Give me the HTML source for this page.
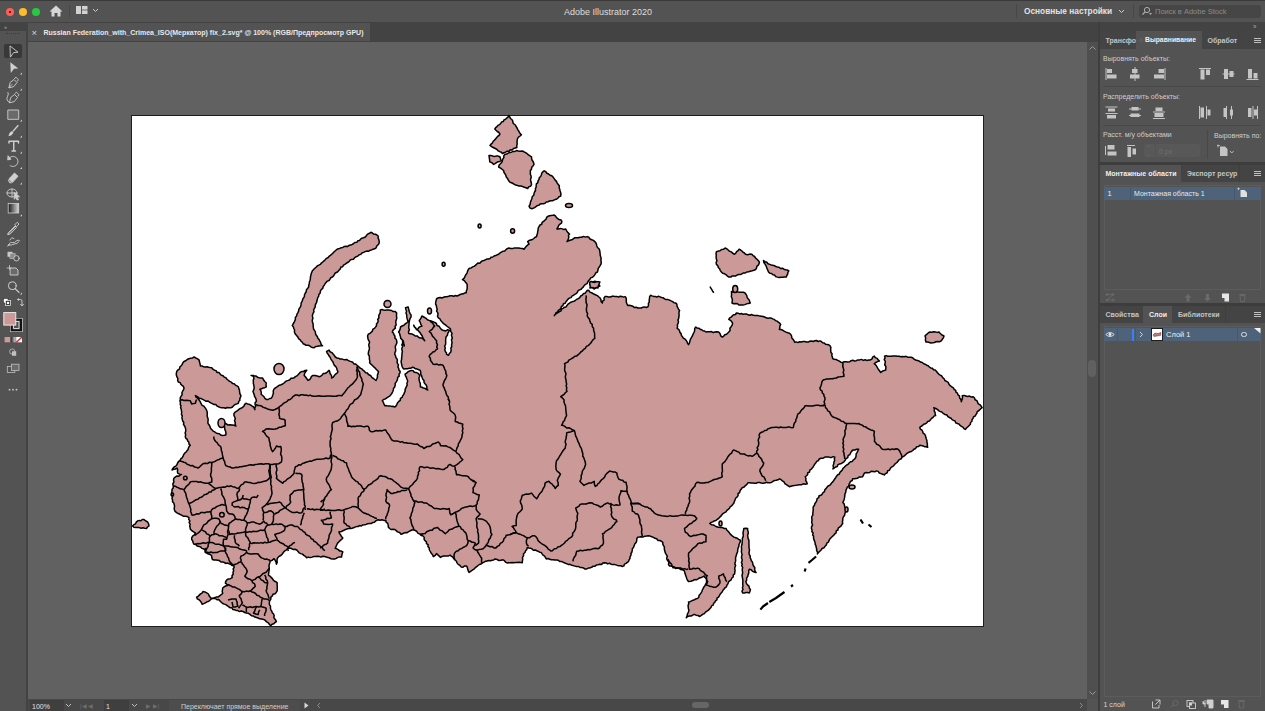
<!DOCTYPE html>
<html><head><meta charset="utf-8">
<style>
*{margin:0;padding:0;box-sizing:border-box}
html,body{width:1265px;height:711px;overflow:hidden;background:#535353;font-family:"Liberation Sans",sans-serif;color:#e6e6e6}
.a{position:absolute}
.t{position:absolute;white-space:nowrap;line-height:1}
</style></head><body>
<!-- title bar -->
<div class="a" style="left:0;top:0;width:1265px;height:22px;background:#535353"></div>
<div class="a" style="left:0;top:0;width:1265px;height:1px;background:#3a3a3a"></div>
<div class="a" style="left:6px;top:8px;width:8px;height:8px;border-radius:50%;background:#fc5f57"></div>
<div class="a" style="left:9px;top:11px;width:2px;height:2px;border-radius:50%;background:#4d0000"></div>
<div class="a" style="left:19px;top:8px;width:8px;height:8px;border-radius:50%;background:#fdbc2e"></div>
<div class="a" style="left:32px;top:8px;width:8px;height:8px;border-radius:50%;background:#28c840"></div>
<svg class="a" style="left:49px;top:5px" width="14" height="12" viewBox="0 0 14 12"><path d="M7 0.5 L13.5 6.5 L11.5 6.5 L11.5 11.5 L8.5 11.5 L8.5 8 L5.5 8 L5.5 11.5 L2.5 11.5 L2.5 6.5 L0.5 6.5 Z" fill="#d6d6d6"/></svg>
<div class="a" style="left:69px;top:5px;width:1px;height:12px;background:#474747"></div>
<svg class="a" style="left:76px;top:6px" width="12" height="9" viewBox="0 0 12 9"><rect x="0" y="0" width="5" height="8" fill="#d2d2d2"/><rect x="6" y="0" width="5.5" height="3.6" fill="#d2d2d2"/><rect x="6" y="4.4" width="5.5" height="3.6" fill="#d2d2d2"/></svg>
<svg class="a" style="left:92px;top:8px" width="7" height="5" viewBox="0 0 7 5"><path d="M1 1 L3.5 3.5 L6 1" stroke="#c8c8c8" stroke-width="1" fill="none"/></svg>
<div class="t" style="left:564px;top:7.5px;font-size:9px;color:#dedede">Adobe Illustrator 2020</div>
<div class="a" style="left:1016px;top:4px;width:1px;height:14px;background:#474747"></div>
<div class="t" style="left:1024px;top:6.5px;font-size:8.3px;font-weight:bold;color:#e2e2e2">Основные настройки</div>
<svg class="a" style="left:1118px;top:9px" width="7" height="5" viewBox="0 0 7 5"><path d="M1 1 L3.5 3.5 L6 1" stroke="#d0d0d0" stroke-width="1" fill="none"/></svg>
<div class="a" style="left:1133px;top:4px;width:1px;height:14px;background:#474747"></div>
<div class="a" style="left:1139px;top:4.5px;width:122px;height:13px;background:#464646;border-radius:3px"></div>
<svg class="a" style="left:1141px;top:6px" width="12" height="10" viewBox="0 0 12 10"><circle cx="6" cy="4" r="2.6" stroke="#b0b0b0" stroke-width="1" fill="none"/><path d="M4.2 5.8 L1.5 8.5" stroke="#b0b0b0" stroke-width="1.2"/><path d="M8 7 L11 7 L9.5 9 Z" fill="#b0b0b0"/></svg>
<div class="t" style="left:1155px;top:7.5px;font-size:7.5px;color:#8a8a8a">Поиск в Adobe Stock</div>

<!-- left toolbar -->
<div class="a" style="left:0;top:22px;width:27px;height:689px;background:#535353"></div>
<div class="a" style="left:0;top:22px;width:27px;height:8.5px;background:#434343"></div>
<div class="t" style="left:4px;top:24px;font-size:6px;color:#aaa;letter-spacing:-1px">››</div>
<div class="a" style="left:6px;top:33px;width:14px;height:1.5px;border-top:1px dotted #3c3c3c"></div>
<div class="a" style="left:26px;top:22px;width:2px;height:689px;background:#434343"></div>
<div class="a" style="left:4px;top:44.2px;width:18px;height:14px;background:#383838;border-radius:2px"></div>
<svg class="a" style="left:0;top:40px" width="27" height="360" viewBox="0 40 27 360">
<g fill="none" stroke="#d0d0d0" stroke-width="0.9" stroke-linejoin="round" stroke-linecap="round">
 <!-- selection -->
 <path d="M10.3 46.2 L18 52.2 L13.6 52.6 L10.6 56.8 Z"/>
 <!-- pen -->
 <path d="M9 87.5 L10.2 82.5 L14 79.5 L17 82.5 L14 86.3 Z M9 87.5 L12 84.5 M14.5 78.5 L16 77.2 L18.3 79.6 L17.6 81"/>
 <!-- curvature -->
 <path d="M9.5 102.5 L10.7 97.5 L14.5 94.5 L17.5 97.5 L14.5 101.3 Z M15 93.5 L16.5 92.2 L18.8 94.6 L18.1 96 M9.5 102.5 Q5.5 100 7.5 96.5 Q9 94 8 92.5"/>
 <!-- rectangle -->
 <rect x="8.2" y="110" width="10.5" height="9.3" fill="#6a6a6a"/>
 <!-- type -->
 <path d="M9 143 L9 141.3 L18.5 141.3 L18.5 143 M13.75 141.3 L13.75 151 M12 151 L15.5 151" stroke-width="1.4"/>
 <!-- rotate -->
 <path d="M10.3 157.2 A5 5 0 1 1 10 165.5" stroke-dasharray="1.2 0.6"/>
 <path d="M8.3 156 L10.8 159.3 L8 159.8 Z" fill="#d0d0d0"/>
 <!-- eraser -->
 <path d="M8.5 179.5 L14.5 173 L18 176.3 L12 182.8 L10 182.8 Z" fill="#d0d0d0"/>
 <path d="M8.5 179.5 L11.2 182 L12 182.8" stroke="#535353" stroke-width="0.6"/>
 <!-- shape builder -->
 <ellipse cx="12" cy="193" rx="5" ry="4"/><path d="M7 193 L17 193 M12 189 L12 197"/>
 <path d="M14.5 192.5 L19.5 196.8 L17 197 L18.5 199.6 L17.2 200 L15.6 197.5 L14.5 199 Z" fill="#d0d0d0"/>
 <!-- eyedropper -->
 <path d="M8.5 234 L15.5 226.5 M8 234.5 L10 234.2 L16.5 227.5 L15 226 L8.5 232.5 Z M15 224.5 L17.2 222.3 L19 224 L16.8 226.3 Z" fill="none"/>
 <!-- blend -->
 <path d="M8.5 244.5 Q11 241.5 12.5 242.5 Q14 243.5 17 240.5 Q19 239.5 19.5 241 Q17 244.5 14 244 Q11 246 9 244.8 M10 240 Q11.5 236.5 14 238.5 M9.5 245 L7.5 246"/>
 <!-- symbol sprayer -->
 <rect x="7.5" y="251.8" width="5" height="5" fill="#c8c8c8" stroke="none"/><rect x="10.2" y="253.5" width="5" height="5" fill="#8a8a8a" stroke="#c8c8c8" stroke-width="0.6"/><circle cx="16.5" cy="258.3" r="2.7" fill="#535353"/>
 <!-- artboard -->
 <path d="M10.5 268 L16 268 L18 270 L18 275 L10.5 275 Z" fill="#6a6a6a"/><path d="M9.5 265.5 L9.5 269.5 M7 268 L11 268" stroke-width="0.8"/>
 <!-- zoom -->
 <circle cx="12.3" cy="285.7" r="3.9" stroke-width="1"/><path d="M15.1 288.6 L19 292.4" stroke-width="1.3"/>
</g>
<g fill="#d0d0d0">
 <path d="M10.3 62.2 L18.3 68.4 L14 68.8 L10.8 73 Z"/>
 <!-- corner tri markers -->
 <path d="M22 72.6 L22 74.6 L20 74.6 Z"/><path d="M22 88.6 L22 90.6 L20 90.6 Z"/><path d="M22 119.6 L22 121.6 L20 121.6 Z"/><path d="M22 135.6 L22 137.6 L20 137.6 Z"/><path d="M22 151.6 L22 153.6 L20 153.6 Z"/><path d="M22 167 L22 169 L20 169 Z"/><path d="M22 182.6 L22 184.6 L20 184.6 Z"/><path d="M22 214.3 L22 216.3 L20 216.3 Z"/><path d="M22 292.6 L22 294.6 L20 294.6 Z"/>
 <!-- brush -->
 <path d="M17.8 124.8 L18.8 125.8 L13.5 131.8 L12.5 130.8 Z"/><path d="M12.2 131 L13.4 132.2 Q12.5 135.5 8.5 136.2 Q9.2 132 12.2 131 Z"/>
</g>
<!-- gradient -->
<defs><linearGradient id="gr" x1="0" x2="1" y1="0" y2="0"><stop offset="0" stop-color="#1a1a1a"/><stop offset="1" stop-color="#d8d8d8"/></linearGradient></defs>
<rect x="8.2" y="203.5" width="10.5" height="9.5" fill="url(#gr)" stroke="#cfcfcf" stroke-width="0.8"/>
<!-- default colors / swap -->
<rect x="3.5" y="298.5" width="4.5" height="4.5" fill="#fff" stroke="#222" stroke-width="0.5"/><rect x="5.5" y="300.5" width="5" height="5" fill="#222" stroke="#fff" stroke-width="0.7"/><rect x="6.8" y="301.8" width="2.4" height="2.4" fill="#fff"/>
<path d="M17.5 299.5 L20.5 299.5 Q22 299.5 22 301 L22 305.5 M20.3 304 L22 306 L23.7 304" stroke="#d0d0d0" stroke-width="0.9" fill="none"/><path d="M17 299.5 L19 298 L19 301 Z" fill="#d0d0d0"/>
<!-- stroke swatch -->
<rect x="10.5" y="318.5" width="11.6" height="13" fill="none" stroke="#f2f2f2" stroke-width="0.9"/>
<rect x="11.6" y="319.6" width="9.4" height="10.8" fill="none" stroke="#111" stroke-width="2"/>
<rect x="13.6" y="321.6" width="5.4" height="6.8" fill="none" stroke="#f2f2f2" stroke-width="0.8"/>
<!-- fill swatch -->
<rect x="3.8" y="312.6" width="12" height="12.5" fill="#cc9999" stroke="#f2f2f2" stroke-width="0.9"/>
<!-- color / gradient / none -->
<rect x="4.6" y="337" width="6" height="5.3" fill="#cc9999"/>
<rect x="10.6" y="337" width="5" height="5.3" fill="url(#gr)"/>
<rect x="16.2" y="337" width="5.8" height="5.3" fill="#fff"/><path d="M16.3 342.2 L22 337" stroke="#e8141b" stroke-width="1.2"/>
<!-- draw mode -->
<circle cx="12.2" cy="351.5" r="2.6" fill="none" stroke="#c0c0c0" stroke-width="0.8"/><rect x="12" y="351.3" width="4.2" height="4.5" fill="#c0c0c0"/>
<!-- screen mode -->
<rect x="7.3" y="366.5" width="7.5" height="6" fill="none" stroke="#c0c0c0" stroke-width="0.8"/><rect x="11.5" y="364.2" width="7.5" height="6.3" fill="#6a6a6a" stroke="#c0c0c0" stroke-width="0.8"/>
<!-- more -->
<circle cx="9.5" cy="389.7" r="0.9" fill="#c8c8c8"/><circle cx="13" cy="389.7" r="0.9" fill="#c8c8c8"/><circle cx="16.5" cy="389.7" r="0.9" fill="#c8c8c8"/>
</svg>


<!-- document tab bar -->
<div class="a" style="left:28px;top:22px;width:1072px;height:20px;background:#434343"></div>
<div class="a" style="left:28px;top:23px;width:342px;height:18px;background:#535353"></div>
<div class="t" style="left:31.5px;top:27.5px;font-size:9.5px;color:#d8d8d8">×</div>
<div class="t" style="left:43.5px;top:29px;font-size:7px;font-weight:bold;color:#e8e8e8">Russian Federation_with_Crimea_ISO(Меркатор) fix_2.svg* @ 100% (RGB/Предпросмотр GPU)</div>

<!-- canvas -->
<div class="a" style="left:28px;top:42px;width:1059px;height:657px;background:#616161"></div>
<div class="a" style="left:131px;top:115px;width:853px;height:512px;background:#fff;border:1px solid #1e1e1e"></div>
<svg width="1265" height="711" viewBox="0 0 1265 711" style="position:absolute;left:0;top:0">
<g fill="#cc9999" stroke="#000" stroke-width="1.5" stroke-linejoin="round">
<polygon points="182.7,421.0 182.3,419.3 181.9,417.6 182.3,415.9 181.4,414.3 181.7,412.5 181.5,410.8 181.2,409.2 180.6,407.6 181.0,405.9 180.2,404.3 180.5,402.7 179.9,401.1 180.2,399.4 180.3,397.6 181.2,396.1 182.2,394.6 181.9,392.7 182.6,391.2 183.6,389.7 184.0,388.0 183.4,386.4 182.0,385.4 180.8,384.3 180.2,382.6 178.3,382.0 177.7,380.4 177.8,378.4 176.8,376.6 176.3,374.8 176.4,372.8 177.0,371.1 178.1,369.8 179.6,368.8 179.9,366.9 181.2,365.8 182.2,364.4 182.9,362.8 184.0,361.5 185.7,360.8 187.2,359.5 188.8,358.8 190.6,358.2 192.5,357.9 194.1,357.0 195.8,358.0 197.6,358.9 199.2,360.2 199.5,362.1 200.1,364.0 200.4,365.9 202.1,365.9 203.6,366.8 205.2,366.9 207.0,366.7 208.5,367.3 210.2,367.6 211.8,367.8 212.9,369.2 214.4,370.1 216.1,370.7 217.0,372.4 219.0,372.6 220.1,373.9 221.3,375.3 223.1,375.8 224.2,377.1 225.9,377.7 227.0,379.2 228.3,380.3 229.7,381.4 231.2,382.1 232.5,383.4 234.2,383.8 235.4,385.1 236.9,385.9 238.4,386.8 238.8,388.6 239.5,390.3 239.6,392.2 240.0,394.0 241.0,395.6 240.5,397.1 239.8,398.6 239.9,400.3 238.7,401.6 238.4,403.2 236.8,403.9 235.1,404.5 233.6,405.6 232.5,407.0 230.8,407.7 229.0,407.8 227.3,407.5 225.5,408.3 223.8,407.7 222.0,407.7 220.2,407.4 218.6,406.7 217.0,406.0 215.8,404.6 213.9,404.5 212.4,403.7 210.8,402.8 209.3,402.0 207.8,400.9 205.8,401.2 204.2,400.2 202.6,399.4 201.0,398.4 199.2,398.2 197.5,396.6 195.4,395.6 196.1,397.1 197.6,398.0 198.5,399.4 199.5,400.6 200.4,402.0 201.1,403.7 202.1,405.3 203.9,406.2 205.0,407.6 206.0,409.1 206.8,410.8 207.3,412.6 207.2,414.4 207.2,416.3 207.8,418.0 208.2,419.8 207.9,421.7 208.0,423.5 209.2,424.9 210.0,426.6 210.6,428.4 211.9,429.7 213.1,431.1 214.6,431.9 216.1,432.8 217.6,433.6 219.4,433.7 220.7,435.0 222.4,435.5 224.1,435.3 225.8,435.0 226.0,433.1 225.6,431.3 224.9,429.6 224.6,427.8 224.5,426.0 222.9,425.1 222.1,423.4 220.3,422.6 219.4,421.0 221.3,421.3 223.0,422.3 224.7,423.0 226.4,424.0 228.0,425.0 230.0,424.7 232.0,424.9 234.0,425.3 235.9,426.0 235.2,424.3 235.2,422.4 234.5,420.7 235.3,418.7 234.7,417.0 233.9,415.3 234.0,413.4 235.2,412.1 236.7,411.2 238.1,410.2 239.3,409.0 241.0,408.3 242.5,407.3 243.9,406.2 244.7,404.4 246.0,403.2 247.5,403.9 249.3,404.3 250.8,405.1 252.2,406.1 253.6,407.0 254.9,409.6 254.8,407.9 255.7,406.2 255.1,404.5 255.1,402.7 256.4,401.2 256.1,399.4 255.5,397.8 254.5,396.4 254.3,394.7 253.6,393.1 253.0,391.5 253.6,389.9 254.2,388.3 254.0,386.7 253.8,385.1 253.3,383.4 253.4,381.8 253.2,380.2 253.9,378.6 253.6,377.0 253.6,375.4 251.1,375.4 252.7,376.1 254.4,375.9 256.1,376.1 257.5,377.2 259.1,377.8 260.8,378.0 262.5,377.9 263.5,379.8 264.7,381.5 266.3,383.0 266.0,384.9 266.3,386.8 264.8,387.7 263.1,388.0 261.6,388.8 259.9,389.3 260.9,390.9 261.3,392.6 261.2,394.4 262.7,395.5 264.0,396.7 264.9,398.3 266.3,399.4 268.1,399.5 269.6,398.5 271.3,398.2 272.3,396.6 272.9,394.8 273.4,393.0 273.2,391.0 273.9,389.3 275.1,388.1 276.6,387.1 278.0,386.1 279.4,385.2 281.1,384.7 282.7,384.0 284.1,383.0 285.3,381.7 286.7,380.9 288.3,380.4 289.8,379.8 290.8,378.3 292.6,378.2 294.2,377.8 295.4,376.6 296.9,375.9 298.1,374.8 299.2,373.6 300.2,372.3 301.7,371.6 303.5,371.5 305.1,370.5 306.8,370.3 305.6,371.8 304.6,373.4 304.2,375.4 305.6,377.0 306.8,378.7 308.0,380.4 309.7,379.5 310.7,378.1 311.5,376.4 313.1,375.4 315.2,375.4 317.1,375.9 319.0,376.7 320.7,376.2 322.1,375.2 323.1,373.6 325.0,373.4 326.5,372.7 327.8,371.5 329.1,370.4 329.8,371.9 330.0,373.5 331.0,374.8 331.7,376.3 331.6,378.0 333.3,377.1 334.3,375.6 335.5,374.2 337.1,373.2 338.0,371.6 337.1,370.0 336.7,368.2 335.8,366.6 334.4,365.4 333.6,363.7 333.0,362.0 331.9,360.6 330.9,359.1 330.3,357.4 329.1,356.1 328.3,354.5 327.1,353.1 326.6,351.4 329.1,350.1 330.1,351.8 331.9,352.6 333.1,354.0 334.3,355.4 335.3,357.0 337.0,358.0 338.6,358.2 340.1,359.1 341.8,359.0 343.3,359.4 344.9,359.7 346.6,359.4 348.1,360.3 349.6,361.1 351.3,361.6 352.8,362.3 353.9,363.9 355.7,364.1 357.0,365.3 358.3,366.3 359.4,367.5 360.8,368.4 362.2,369.2 363.3,370.4 364.6,371.4 365.7,372.7 367.4,373.0 368.4,374.5 369.9,375.2 371.1,376.2 372.0,377.7 373.5,378.5 374.7,379.5 376.0,380.5 376.8,378.8 377.5,377.1 377.4,375.1 378.1,373.4 378.5,371.6 377.2,370.3 376.0,369.1 374.8,367.7 373.4,366.6 372.2,365.3 370.9,364.1 369.6,362.8 369.9,361.1 369.4,359.4 369.4,357.7 369.3,356.0 368.3,354.4 368.4,352.7 368.7,351.0 369.3,349.4 369.4,347.6 368.8,345.8 368.9,344.1 369.6,342.5 369.0,340.8 368.1,339.3 367.8,337.6 367.6,335.8 368.3,334.2 370.0,333.4 371.2,332.2 372.4,331.1 372.9,329.2 374.5,328.4 375.5,327.1 376.5,325.7 376.5,324.0 377.7,322.6 378.2,321.1 377.7,319.3 378.9,317.9 378.7,316.2 379.1,314.6 380.1,313.2 380.3,311.6 380.3,309.9 381.9,309.6 383.5,310.0 385.1,310.2 386.8,310.1 388.4,310.0 390.0,310.2 391.6,310.5 393.2,311.6 395.3,311.6 396.7,313.0 396.5,314.7 396.5,316.4 396.8,318.1 396.3,319.8 395.8,321.4 395.8,323.1 396.2,324.9 395.0,326.5 395.4,328.2 394.1,329.2 392.9,330.4 392.3,332.0 393.5,333.3 394.0,334.8 395.0,336.2 394.9,338.1 396.2,339.3 396.7,340.9 396.9,342.7 396.3,344.3 395.4,345.9 395.3,347.6 395.7,349.4 395.6,351.1 394.9,352.7 394.8,354.4 395.6,355.8 395.8,357.4 396.9,358.8 397.4,360.3 397.0,362.1 397.7,363.6 398.5,365.0 397.9,366.8 398.7,368.3 398.9,369.9 400.1,371.2 400.0,372.9 399.0,374.3 399.2,376.2 397.7,377.3 397.5,379.1 397.0,380.7 396.1,382.1 395.1,383.5 395.2,385.3 394.7,386.9 393.6,388.2 393.3,389.9 392.8,391.5 392.1,393.0 391.1,394.4 390.0,395.9 388.4,396.8 386.8,397.8 385.4,398.9 383.6,399.5 382.3,400.8 383.4,402.4 384.0,404.1 384.8,405.8 386.5,405.6 388.2,406.1 389.9,405.9 391.6,406.4 393.3,406.3 394.9,407.1 396.1,405.8 396.9,404.3 397.6,402.7 398.8,401.4 400.3,400.3 400.4,398.4 402.1,397.4 402.7,395.8 403.8,394.4 404.3,392.8 405.1,391.4 405.1,389.6 405.7,388.1 406.4,386.6 407.2,385.1 406.9,383.3 407.6,381.8 407.5,380.2 406.8,378.7 406.3,377.2 405.5,375.8 405.1,374.2 406.6,373.1 408.0,371.8 409.6,371.0 411.4,370.4 413.2,370.7 414.3,372.2 416.1,372.4 417.7,373.1 419.0,374.2 419.7,375.9 419.0,377.8 419.1,379.6 419.5,381.4 420.2,383.2 420.4,385.0 420.3,386.8 421.9,387.2 423.3,388.0 425.0,388.3 426.3,389.3 427.8,390.0 426.8,388.6 426.9,386.7 426.2,385.1 425.0,383.8 424.0,382.4 424.0,380.5 422.8,379.2 422.1,377.5 421.6,375.7 420.7,374.1 420.7,372.2 420.3,370.4 418.8,369.8 417.3,369.1 415.6,368.8 414.2,367.8 412.7,367.2 411.0,368.2 409.2,368.2 407.5,368.8 405.6,368.8 403.8,369.1 402.7,367.7 402.0,366.2 401.7,364.5 401.3,362.8 401.1,361.2 401.6,359.5 401.6,357.9 401.9,356.3 401.9,354.7 402.1,353.0 402.4,351.4 401.9,349.8 401.9,348.1 402.7,346.5 401.8,344.9 402.6,343.3 402.6,341.6 402.5,340.0 403.6,341.8 403.3,344.1 404.3,346.0 404.1,344.3 403.2,342.8 402.7,341.2 402.1,339.6 400.7,338.4 400.5,336.7 399.9,335.1 399.6,333.4 398.6,332.0 399.6,330.5 400.2,328.8 400.5,327.0 402.1,326.0 403.9,325.2 405.2,323.9 406.8,322.8 408.2,321.5 407.5,319.9 407.0,318.2 406.8,316.4 406.7,314.7 406.0,313.0 406.6,311.1 405.9,309.5 405.5,307.8 408.2,306.9 408.5,308.6 409.0,310.3 409.4,312.0 410.1,313.6 411.1,315.2 411.0,317.0 410.0,318.7 409.5,320.5 409.1,322.4 409.0,324.2 408.9,326.1 408.7,327.9 409.4,329.8 408.5,331.6 408.7,333.4 410.4,333.7 412.2,334.1 413.7,334.9 415.2,336.0 417.1,335.9 418.5,337.1 420.1,338.0 421.9,338.0 423.3,339.3 424.7,340.7 423.7,339.2 422.8,337.5 422.1,335.8 421.0,334.3 420.2,332.8 419.0,331.6 418.0,330.3 416.4,329.4 415.5,328.1 414.5,326.7 413.7,325.2 414.4,326.9 415.8,328.1 416.5,329.7 417.9,328.9 418.9,327.4 420.3,326.6 421.9,326.1 420.8,324.4 420.3,322.3 419.2,320.6 420.3,319.2 421.2,317.6 421.9,316.0 424.6,317.5 426.2,318.4 427.4,319.7 429.2,320.4 431.1,321.0 432.9,321.7 434.7,322.4 436.4,323.5 437.1,325.5 439.1,326.3 440.2,327.9 441.7,329.7 443.9,330.6 445.7,331.0 447.4,329.8 449.2,330.2 448.7,331.9 447.7,333.4 447.5,335.2 446.1,336.8 445.7,338.9 445.6,340.7 445.7,342.6 445.6,344.4 444.6,346.1 445.3,348.0 444.8,349.8 445.3,351.4 446.4,352.7 446.6,354.4 448.4,355.3 449.4,353.5 450.8,351.9 451.2,349.8 450.8,348.1 451.8,346.5 451.5,344.9 452.0,343.3 451.9,341.6 451.4,339.9 452.3,338.3 451.9,336.7 451.4,335.0 452.1,333.4 450.7,331.4 450.5,329.0 448.9,327.7 447.3,326.5 445.7,325.2 444.3,324.2 443.0,323.1 441.9,321.7 440.7,320.5 439.9,318.8 438.4,317.9 437.5,316.3 438.0,314.4 437.7,312.6 436.6,311.1 437.2,309.2 436.6,307.5 436.4,305.7 435.6,304.1 435.7,302.3 436.1,300.5 436.6,298.7 438.5,297.8 440.2,297.5 441.9,298.0 443.6,297.3 445.2,296.8 446.9,296.7 448.6,296.3 450.2,295.8 451.9,295.7 453.7,296.3 455.3,295.5 457.1,296.0 458.7,295.3 460.1,294.5 461.7,294.0 463.3,293.8 464.7,292.9 466.3,292.8 466.3,291.0 467.1,289.3 467.2,287.5 467.2,285.7 467.0,283.9 465.6,282.3 464.3,280.6 462.5,279.5 464.2,278.2 465.0,276.3 465.9,274.7 467.0,273.1 467.6,271.3 468.3,269.5 469.4,268.2 471.2,268.0 472.5,266.9 474.1,266.4 475.4,265.4 476.6,264.2 477.8,263.1 479.8,263.2 480.9,261.9 482.2,260.9 483.8,260.6 485.3,259.8 486.7,259.1 488.4,259.0 490.0,258.6 491.1,257.2 492.8,257.0 494.1,256.0 495.7,255.6 497.1,254.8 498.6,254.3 499.8,253.1 501.3,252.2 502.8,251.3 504.7,251.1 505.9,249.8 507.2,248.6 508.8,248.0 510.7,248.5 512.6,248.6 514.5,247.9 516.4,248.0 518.4,247.9 520.3,248.2 522.2,248.4 524.0,249.2 525.1,247.8 526.2,246.4 527.5,245.2 529.0,244.2 527.7,241.6 529.0,240.5 530.7,240.0 532.4,239.5 533.8,238.5 535.1,237.3 536.6,236.6 536.9,234.9 537.5,233.2 537.7,231.5 538.1,229.8 538.2,228.1 539.1,226.5 540.0,225.0 541.7,224.3 542.1,222.4 543.6,221.4 544.8,220.2 546.1,219.1 546.6,217.4 548.0,216.3 549.5,215.7 551.1,215.4 552.7,215.3 554.3,215.1 555.6,216.1 556.5,217.6 557.8,218.6 559.1,219.6 561.0,219.9 561.9,221.4 561.4,223.2 559.7,224.3 558.5,225.7 557.9,227.5 556.9,229.0 558.7,229.1 560.4,228.4 562.2,228.9 563.9,229.5 565.7,229.0 566.7,230.9 567.9,232.6 569.5,234.0 568.5,235.3 568.8,237.1 568.4,238.7 567.9,240.2 567.0,241.6 568.5,240.9 570.1,240.3 571.8,239.8 573.2,238.8 574.6,237.8 576.4,237.8 578.2,237.8 580.0,237.2 581.8,237.2 583.5,236.4 585.4,237.1 587.2,236.6 588.9,237.3 590.0,239.0 591.7,239.7 593.4,240.4 594.8,241.6 595.9,242.9 596.5,244.4 596.8,246.0 597.5,247.5 598.9,248.7 599.6,250.1 599.9,251.8 600.1,253.5 600.2,255.2 600.7,256.8 601.1,258.5 600.9,260.2 601.2,261.9 601.1,263.8 600.2,265.4 599.3,267.0 598.2,268.4 597.9,270.3 597.4,272.0 595.8,272.9 594.9,274.6 593.8,276.0 592.5,277.3 590.7,277.9 589.8,279.6 588.5,280.6 587.8,282.2 587.0,283.6 585.5,284.4 584.2,285.5 583.4,286.9 582.2,288.0 581.1,289.3 579.5,289.9 578.1,290.7 577.3,292.4 576.2,293.6 574.7,294.4 573.4,295.3 571.9,296.1 571.0,297.6 569.3,298.1 568.1,299.1 567.0,300.4 565.9,301.7 565.2,303.2 563.4,303.8 562.9,305.6 561.4,306.5 560.9,308.2 559.8,309.5 558.3,310.3 557.7,312.0 556.0,312.7 555.4,314.3 554.3,315.6 555.3,314.3 556.6,313.3 558.0,312.5 559.5,311.7 561.0,310.9 561.7,309.1 563.1,308.4 564.2,307.2 566.1,306.9 567.0,305.4 568.1,304.1 569.5,303.1 570.9,302.2 572.5,301.6 574.2,301.2 575.5,300.3 576.8,299.2 578.4,298.6 579.7,297.6 580.7,296.0 582.2,295.3 583.2,293.8 585.1,293.2 586.2,291.8 587.2,290.3 588.9,290.6 589.9,292.1 591.5,292.7 592.9,293.5 594.4,294.3 595.9,295.0 597.4,295.6 598.6,296.7 599.9,297.8 600.9,299.4 601.1,301.4 602.4,302.9 602.6,301.2 604.2,300.0 604.0,298.0 605.0,296.6 606.7,296.4 608.4,297.0 610.0,297.0 611.7,296.5 613.4,296.1 615.1,296.6 616.8,296.4 618.5,297.1 620.2,296.2 621.8,296.4 623.5,297.1 625.2,296.6 626.2,298.2 626.3,300.1 626.3,302.0 626.9,303.7 627.7,305.4 629.5,305.3 631.2,305.7 632.9,306.2 634.4,307.6 636.3,307.3 637.9,308.0 639.6,308.1 641.3,308.0 642.9,307.2 644.6,306.9 646.4,307.5 648.0,306.7 648.5,305.1 648.4,303.4 649.3,301.9 649.2,300.1 649.5,298.5 649.6,296.8 650.5,295.3 652.0,295.9 653.6,296.4 655.2,296.4 656.7,297.1 658.5,296.3 660.1,296.9 661.6,297.5 663.2,297.8 664.6,298.9 666.1,299.6 668.0,299.6 669.6,300.1 671.1,300.9 672.7,301.6 674.0,302.7 675.8,302.9 676.9,304.2 677.0,306.1 677.8,307.6 678.5,309.2 679.6,310.5 679.0,312.1 679.0,313.7 679.1,315.4 678.9,317.0 678.6,318.6 677.9,320.1 678.5,321.8 678.1,323.4 677.3,324.9 677.6,326.6 677.1,328.2 678.5,329.3 679.5,330.6 679.9,332.4 681.1,333.6 681.4,335.4 682.4,336.7 683.3,338.2 684.9,339.0 686.1,340.3 687.0,341.7 687.6,343.3 688.5,344.7 689.4,343.2 689.8,341.5 690.2,339.8 691.1,338.2 692.0,336.7 692.7,335.1 693.4,333.5 694.2,332.0 694.7,330.3 694.7,328.4 695.8,327.0 697.1,328.1 698.8,328.2 700.1,329.2 701.7,329.7 703.0,330.8 704.7,331.0 706.0,332.0 707.8,331.7 709.6,331.7 711.4,331.6 713.2,332.5 715.0,332.1 716.8,331.8 718.6,332.0 720.0,333.6 720.7,335.8 722.4,337.1 723.7,336.1 724.8,334.8 726.5,334.3 727.6,333.2 728.8,332.0 730.1,330.5 729.9,328.3 731.1,326.7 732.2,325.1 732.6,323.2 731.6,321.6 730.4,320.3 728.8,319.4 729.7,317.9 731.2,317.1 732.3,315.9 733.6,314.8 735.5,314.5 736.4,313.0 738.1,313.3 739.7,313.9 741.5,313.5 743.1,314.3 744.8,314.0 746.5,314.0 748.1,314.8 749.8,315.3 751.6,314.5 753.2,315.3 754.9,315.5 756.6,315.6 758.3,315.6 759.9,316.1 761.5,316.2 763.1,316.6 764.7,317.0 766.2,317.8 767.8,318.2 769.5,318.0 771.2,318.1 772.7,318.9 774.3,319.4 775.4,320.6 777.1,321.1 778.3,322.2 779.6,323.1 780.7,324.4 779.9,326.0 779.8,327.8 779.4,329.5 781.3,329.6 782.9,330.3 784.5,331.3 786.1,332.1 787.8,332.8 789.5,333.3 790.8,334.5 791.6,336.1 791.8,337.9 793.0,339.2 794.0,340.6 794.6,342.2 796.3,341.9 798.0,342.6 799.6,341.7 801.4,341.9 803.0,341.6 804.7,341.6 806.4,342.0 808.1,342.1 809.8,341.3 811.4,341.0 813.2,341.5 814.8,340.8 816.5,340.5 818.2,341.5 819.9,340.9 821.4,341.5 822.6,342.7 824.3,342.9 825.5,344.2 827.1,344.4 828.7,344.8 830.0,345.9 830.9,347.4 830.6,349.1 830.8,350.7 830.8,352.3 832.1,353.7 831.8,355.5 832.4,357.0 832.6,358.6 834.3,359.2 836.1,359.5 837.7,360.3 839.3,361.2 840.8,362.2 842.7,362.4 844.3,361.7 846.1,361.8 847.8,361.9 849.5,361.8 851.1,360.7 852.8,360.3 854.6,361.0 856.3,360.7 857.9,359.9 859.7,359.9 861.5,359.4 863.3,360.4 865.1,359.8 866.9,360.4 868.7,360.0 870.5,359.9 872.0,358.9 872.7,357.1 874.3,356.1 875.3,357.6 877.1,358.4 878.2,359.8 879.4,361.1 877.5,361.6 875.8,362.5 874.3,363.7 875.7,364.9 876.7,366.4 877.6,368.0 878.5,369.6 879.7,371.0 880.7,372.5 882.2,371.3 883.9,370.6 885.7,370.0 885.8,368.2 885.9,366.5 884.7,364.8 885.2,363.0 885.3,361.3 884.2,359.6 885.1,357.8 884.5,356.1 886.1,355.6 887.7,356.2 889.3,356.2 891.0,356.3 892.6,355.9 894.2,356.0 895.8,356.1 897.5,356.3 899.2,356.3 900.9,356.7 902.6,356.6 904.3,356.7 906.0,356.3 907.6,357.2 909.3,357.2 911.0,357.3 912.7,357.8 914.0,359.2 915.6,360.0 917.4,360.5 919.1,361.0 920.5,362.1 922.3,362.5 923.7,363.7 925.3,364.2 926.6,365.3 928.2,365.8 929.4,367.0 930.7,367.9 932.4,368.3 933.5,369.8 935.2,370.0 936.4,371.3 937.5,372.8 938.7,374.1 940.2,375.1 941.8,376.0 942.7,377.6 944.1,378.8 944.9,380.5 946.5,381.4 948.2,382.4 949.0,384.3 950.2,385.7 951.8,386.8 953.4,387.9 954.1,389.4 955.7,390.3 955.9,392.2 957.4,393.2 958.0,394.8 959.4,395.8 959.6,397.9 961.0,399.6 961.3,401.7 962.0,399.8 962.5,397.9 962.3,395.8 964.2,395.4 965.9,396.0 967.7,396.6 969.6,396.1 971.3,397.1 973.2,396.8 974.5,398.0 975.1,399.8 976.9,400.6 977.6,402.3 978.4,403.9 980.1,404.8 981.2,406.2 982.1,407.7 980.5,409.0 979.0,410.5 977.2,411.6 976.9,413.3 975.9,414.6 975.2,416.0 973.5,416.9 973.0,418.4 972.0,419.7 971.9,421.5 970.5,422.5 970.4,424.3 969.2,425.5 967.9,426.8 966.5,428.0 965.3,429.4 963.9,428.6 962.9,427.1 961.4,426.4 960.1,425.4 959.0,424.1 957.4,423.5 955.8,422.9 955.1,421.0 953.5,420.4 952.1,419.6 951.0,418.2 949.5,417.5 947.9,416.7 946.9,415.0 945.1,414.5 943.5,413.7 942.2,412.3 940.5,411.6 938.9,410.9 937.6,409.6 935.8,408.4 933.7,407.7 934.6,409.2 934.1,410.9 935.1,412.4 935.1,414.1 935.6,415.6 933.9,416.1 932.9,417.5 931.5,418.4 930.5,419.7 929.4,421.0 927.7,421.5 926.7,422.9 925.3,423.8 923.7,424.3 922.5,425.5 921.1,426.4 919.8,427.4 920.3,429.1 921.9,430.0 922.7,431.5 923.1,433.2 924.6,434.2 925.5,435.6 925.8,437.3 926.3,438.9 926.9,440.5 926.9,442.2 927.4,443.8 927.3,445.6 927.7,447.2 926.1,446.7 924.5,446.7 923.0,445.9 921.4,445.6 919.8,445.2 918.6,446.6 916.6,446.8 915.5,448.5 913.9,449.2 912.7,450.5 911.2,451.6 909.4,452.0 907.8,452.8 906.3,453.9 905.1,455.2 903.7,456.3 902.1,457.1 901.2,458.8 899.3,459.6 898.1,461.0 897.0,462.5 895.4,463.6 894.2,465.0 893.0,466.3 891.4,467.1 890.3,468.5 889.5,470.2 887.7,470.8 887.2,472.8 885.5,473.6 884.3,474.9 882.7,474.2 881.0,473.6 879.3,473.0 878.1,471.4 876.4,470.9 874.8,471.8 873.0,471.4 871.2,471.2 869.7,472.5 868.0,472.7 866.2,472.5 864.5,472.9 863.5,474.8 862.5,476.8 860.8,477.0 859.1,477.1 857.6,478.2 855.9,478.4 854.3,478.7 852.6,478.8 852.2,480.5 850.5,481.4 849.8,482.9 849.0,484.3 848.9,486.2 847.2,487.1 846.7,488.7 845.9,490.3 845.8,492.2 845.0,493.8 844.8,495.6 844.6,497.4 844.2,499.2 843.6,500.9 842.8,502.5 844.1,503.8 844.5,505.6 844.9,507.4 845.7,508.9 846.7,510.4 845.5,511.8 844.9,513.4 844.6,515.3 843.5,516.7 842.8,518.3 842.8,520.0 842.4,521.8 842.7,523.5 841.7,524.8 840.9,526.2 839.5,527.2 838.2,528.2 837.9,530.1 836.3,530.8 836.1,532.8 834.8,533.8 833.9,535.1 832.6,536.2 831.3,537.5 830.0,538.8 829.1,540.4 828.4,542.1 826.8,543.1 826.3,545.0 825.0,546.3 824.0,547.8 822.1,548.5 821.1,550.0 819.8,551.2 818.5,552.5 817.4,553.9 817.6,552.2 816.6,550.7 816.7,549.0 816.2,547.5 816.0,545.8 815.2,544.4 815.1,542.7 814.6,541.1 813.9,539.6 813.5,538.0 813.6,536.3 812.6,534.9 813.2,533.1 811.9,531.7 812.0,530.0 811.4,528.3 811.6,526.7 812.6,525.0 811.9,523.3 811.7,521.7 812.1,520.0 811.7,518.3 811.8,516.7 812.8,515.1 812.8,513.4 813.0,511.8 813.2,510.2 813.1,508.5 813.3,506.7 814.5,505.2 814.9,503.5 816.1,502.0 816.8,500.4 817.1,498.6 818.6,497.7 819.1,495.8 821.0,495.3 822.2,494.1 823.0,492.6 824.5,491.7 824.8,489.8 826.0,488.6 827.0,487.3 828.0,486.0 829.8,485.3 830.9,484.1 831.8,482.7 833.0,481.6 833.9,480.2 834.9,478.8 835.8,477.4 836.7,476.0 837.8,474.7 839.4,474.0 840.0,472.3 841.2,471.1 842.3,470.0 843.0,468.4 844.3,467.3 845.4,466.1 846.7,465.0 848.2,464.2 849.2,462.9 850.5,461.8 852.3,461.4 853.3,460.0 854.6,459.0 855.7,457.5 856.1,455.8 856.1,453.9 857.2,452.4 857.9,450.8 858.6,449.2 856.6,449.2 854.8,450.0 852.8,450.1 851.5,451.4 850.6,453.0 849.8,454.7 848.1,455.7 847.8,457.7 846.0,458.6 845.2,460.3 844.1,461.6 842.8,462.7 841.3,463.5 839.6,463.9 838.0,464.6 837.3,466.5 835.6,467.0 834.3,468.0 832.9,468.9 833.5,467.3 833.1,465.5 833.8,463.8 833.9,462.1 834.7,460.5 834.3,458.7 834.9,457.1 833.2,456.6 831.6,457.4 830.0,457.4 828.3,456.9 826.6,457.1 825.0,457.1 823.2,458.2 821.0,458.2 819.1,459.0 818.5,460.6 816.8,461.3 815.9,462.7 814.9,463.9 814.0,465.3 813.3,466.7 812.2,468.0 811.3,469.2 809.8,470.2 809.6,472.0 807.8,472.7 807.6,474.6 806.5,475.7 805.2,476.8 806.0,478.5 805.7,480.4 806.7,482.1 807.2,483.8 805.2,484.2 803.2,483.8 801.3,484.8 799.3,484.7 797.7,485.1 796.0,485.3 794.3,485.4 792.6,485.7 791.0,486.2 789.4,486.7 787.9,485.7 786.4,484.6 784.9,483.6 784.0,481.9 782.4,480.9 781.1,479.7 779.5,478.8 778.0,479.8 776.2,480.2 774.4,480.5 772.9,481.4 771.4,482.5 769.6,482.8 767.9,482.8 766.3,482.3 764.6,483.1 762.9,483.2 761.3,483.0 759.6,482.6 757.9,482.4 756.2,483.2 754.6,483.2 752.9,483.1 751.2,483.0 749.6,482.8 747.9,482.8 746.9,484.4 745.4,485.6 744.2,487.0 742.2,487.7 741.1,489.2 740.0,490.7 739.7,492.5 738.0,493.6 738.1,495.6 737.0,497.1 735.6,498.3 735.0,500.0 734.3,501.6 733.8,503.3 732.7,504.5 731.7,505.9 730.2,506.7 729.5,508.3 728.2,509.4 726.9,510.4 726.0,511.9 724.5,512.7 723.0,513.6 721.9,514.8 720.9,516.2 719.7,517.2 718.6,518.5 717.2,519.4 715.9,520.5 714.1,520.9 712.8,521.9 711.1,522.4 709.8,523.5 711.4,524.7 713.4,524.9 715.0,525.9 716.7,526.8 718.6,527.3 720.5,527.5 722.5,527.6 724.3,528.5 726.2,528.6 726.9,530.2 728.1,531.3 729.2,532.6 730.1,533.9 731.4,535.1 732.6,536.2 734.0,537.1 735.7,537.7 737.3,538.3 738.6,539.4 740.2,540.0 740.3,541.7 739.6,543.2 738.9,544.7 738.9,546.3 738.1,548.0 737.7,549.8 737.6,551.7 736.9,553.4 736.4,555.1 735.8,556.9 735.5,558.6 735.7,560.3 735.3,562.0 734.8,563.6 735.6,565.4 735.0,567.0 734.7,568.7 735.1,570.4 734.8,572.1 734.7,573.8 733.3,574.9 733.2,577.0 731.7,578.1 731.2,579.8 729.6,580.8 728.4,582.2 727.9,583.9 726.9,585.2 726.4,586.8 725.0,587.8 724.1,589.1 723.0,590.3 722.3,591.8 721.2,593.0 720.1,594.2 719.4,595.7 718.6,597.1 717.1,598.0 716.9,599.8 715.5,600.8 714.9,602.3 713.6,603.4 713.2,605.1 711.5,605.9 711.0,607.5 709.7,608.8 708.5,610.2 707.0,611.1 705.5,612.1 704.4,613.6 702.7,614.3 701.3,615.4 699.8,616.5 698.0,615.5 696.0,615.2 694.2,614.3 692.7,615.2 691.2,616.0 689.3,616.1 687.7,616.5 686.3,617.7 687.1,615.8 687.5,613.8 688.5,612.0 688.9,610.3 688.4,608.6 688.2,607.0 688.1,605.3 688.8,603.6 688.5,601.9 690.1,601.7 691.6,600.9 693.0,600.2 694.5,599.7 695.9,598.8 697.5,598.5 698.8,597.3 699.0,595.5 700.1,594.3 701.1,592.9 701.9,591.5 702.4,589.8 703.2,588.4 703.9,586.9 705.0,585.7 705.5,584.1 707.1,583.2 707.7,581.6 706.7,580.3 706.4,578.6 704.9,577.5 704.3,576.0 702.7,576.8 701.2,577.6 699.5,578.0 698.0,578.9 696.4,579.8 694.5,579.6 693.0,580.5 690.8,581.3 688.5,581.6 687.5,580.2 686.8,578.7 686.3,577.1 685.7,575.4 685.1,573.8 684.7,572.0 684.0,570.4 682.4,569.7 680.7,569.6 679.3,568.4 677.6,568.0 675.7,568.4 674.4,567.0 672.8,566.4 671.1,566.1 669.4,565.9 668.5,564.5 668.9,562.7 668.2,561.2 667.1,559.8 666.6,558.2 667.3,556.4 666.5,554.9 665.6,553.4 665.0,551.9 664.6,550.3 664.3,548.8 664.4,547.0 663.5,545.6 662.8,544.1 662.8,542.4 661.4,541.2 659.8,540.5 657.9,540.4 656.7,538.8 654.9,538.3 653.4,537.4 651.8,536.7 650.1,536.1 648.3,535.8 646.5,536.1 644.7,536.2 642.9,537.1 641.1,536.7 639.3,537.1 637.5,537.3 636.8,538.9 636.7,540.7 636.2,542.4 634.9,543.7 634.2,545.5 633.6,547.3 632.4,548.7 632.2,550.4 631.9,552.0 631.0,553.5 631.0,555.2 630.1,556.6 630.0,558.3 629.1,559.8 628.6,561.4 627.3,562.4 626.1,563.4 624.5,564.1 623.9,565.9 622.3,566.5 620.8,565.8 619.1,565.8 617.5,565.4 615.9,564.9 614.3,564.4 612.6,564.6 611.0,564.2 609.5,563.2 607.7,563.9 606.2,562.9 604.6,562.7 602.9,563.1 601.6,564.4 599.7,564.3 598.1,564.8 596.3,565.1 595.0,566.3 593.1,566.2 591.7,567.3 590.0,567.9 588.3,568.0 586.8,569.0 585.0,569.1 583.5,567.9 581.8,567.6 580.0,567.5 578.5,566.5 576.6,566.6 575.0,566.1 573.3,565.6 571.6,565.2 570.0,564.3 568.1,564.4 566.5,563.6 564.9,563.0 563.2,562.3 561.7,561.4 559.8,561.5 558.3,560.3 556.5,560.1 554.8,560.0 553.1,559.7 551.4,559.8 549.7,559.3 548.1,558.5 546.3,558.9 545.4,557.5 544.6,556.1 543.1,555.2 542.1,553.9 541.3,552.5 539.7,552.2 538.2,551.3 536.7,550.7 535.2,550.0 533.3,550.2 532.1,548.9 530.6,548.2 528.9,548.0 527.3,547.5 526.8,549.4 525.6,550.8 525.0,552.5 523.5,553.8 523.6,555.6 522.5,557.3 522.7,559.1 522.4,560.9 522.3,562.7 520.6,562.4 518.9,562.3 517.2,562.6 515.5,562.6 513.8,562.7 512.1,562.6 510.4,562.7 508.7,562.7 507.0,562.9 505.5,562.1 504.5,560.7 503.0,559.8 501.0,560.2 499.0,560.6 497.2,559.5 495.1,559.0 493.6,559.9 492.0,560.2 490.5,560.7 488.8,560.6 487.1,560.9 485.5,561.3 484.0,562.1 482.5,562.9 481.1,564.0 479.4,564.5 478.0,565.5 476.7,566.7 475.3,567.7 473.9,569.1 472.3,570.2 470.6,571.3 469.0,572.4 468.2,570.9 467.7,569.3 467.4,567.6 466.6,566.1 464.7,565.9 463.0,567.2 461.1,566.9 459.9,565.4 458.2,564.4 457.0,562.9 456.3,561.0 454.8,559.8 453.7,558.5 452.8,557.0 451.2,556.2 450.0,555.0 448.6,556.0 446.9,555.9 445.3,556.1 443.6,556.1 442.0,556.4 440.6,557.4 439.2,556.1 437.9,554.9 436.6,553.5 435.3,555.4 433.4,556.6 432.8,555.1 431.6,553.8 430.8,552.4 430.0,551.0 429.2,549.5 429.2,547.7 427.9,546.6 428.1,544.6 426.4,543.6 426.5,541.8 425.0,540.7 424.1,539.3 424.2,537.4 423.2,536.1 421.5,535.6 420.0,534.5 422.5,535.5 421.2,534.3 419.4,533.9 417.8,533.1 416.8,531.4 415.3,530.5 413.7,529.8 411.9,530.0 410.2,530.8 408.6,531.7 407.2,532.7 405.5,532.6 404.0,533.0 402.5,533.7 401.0,534.2 399.6,532.5 397.5,531.9 396.0,530.4 394.6,529.4 392.9,529.2 391.0,529.5 389.6,528.5 388.3,527.1 388.2,525.1 387.7,523.4 386.1,522.2 385.8,520.3 383.9,520.4 382.0,519.7 380.1,520.2 378.2,519.7 376.1,520.6 374.4,522.2 372.7,522.6 371.2,523.5 369.4,523.6 367.6,523.8 366.0,524.4 364.3,524.7 362.7,524.9 361.3,526.0 359.6,525.6 358.2,526.5 356.5,526.6 355.0,527.1 353.5,527.8 352.0,528.2 350.4,528.5 348.7,528.6 347.0,528.9 345.4,529.5 343.9,530.3 342.3,531.0 340.8,531.8 339.0,531.7 339.5,533.6 340.7,535.0 341.5,536.6 342.8,538.0 341.7,539.4 340.2,540.4 339.0,541.8 337.6,543.1 336.8,544.8 336.0,546.5 335.2,548.2 336.8,548.8 338.3,549.6 339.6,550.9 341.3,551.1 342.8,552.0 342.2,553.6 341.8,555.3 341.5,557.0 339.6,556.9 337.9,557.4 336.3,558.4 334.6,559.1 332.7,558.9 331.0,558.7 329.5,558.0 327.9,557.4 326.3,557.0 324.6,556.5 322.8,556.2 320.9,557.1 319.2,556.4 317.4,556.2 315.6,556.4 313.8,556.5 312.0,557.1 310.2,557.6 308.4,557.1 306.6,557.7 305.4,556.3 303.8,555.4 302.5,554.1 300.7,553.6 299.1,552.8 297.9,551.3 296.7,550.0 295.0,549.2 293.1,549.4 291.3,548.5 289.4,548.1 287.5,548.4 286.6,549.8 285.1,550.6 283.9,551.7 283.0,553.0 282.0,554.4 280.8,555.5 279.3,556.2 278.1,557.3 277.2,558.7 277.0,560.5 277.2,562.4 276.4,564.2 276.0,562.2 275.2,560.4 274.1,558.7 272.3,560.2 270.1,561.1 269.8,562.9 269.2,564.6 269.0,566.4 269.3,568.2 269.1,570.0 268.9,571.8 268.6,573.5 268.5,575.3 270.0,576.2 271.2,577.4 272.4,578.6 273.3,580.1 274.5,581.2 276.0,581.8 277.2,582.9 277.1,584.9 277.3,586.8 277.2,588.8 277.2,590.8 276.2,592.4 275.1,593.7 273.0,594.2 272.3,595.9 270.9,597.1 270.8,599.1 269.7,600.8 269.3,602.7 269.4,604.6 270.5,606.2 270.4,608.1 270.9,609.8 271.8,611.2 272.3,612.8 273.5,614.0 274.2,615.5 273.8,617.4 274.6,618.8 275.7,620.1 276.4,621.6 275.0,622.5 273.8,623.8 272.1,624.3 270.9,625.6 269.5,624.6 268.6,623.1 267.1,622.2 265.9,621.1 264.7,619.9 263.0,619.3 261.3,619.0 259.7,618.8 258.1,618.0 256.5,617.5 254.9,617.1 253.5,616.1 251.5,615.8 250.0,614.4 248.4,613.3 246.4,612.9 244.7,612.5 243.1,611.5 241.4,611.1 239.5,611.6 237.9,610.6 236.2,610.4 234.5,609.8 232.8,609.4 231.8,607.7 229.9,607.7 228.6,606.6 227.2,605.7 225.9,604.6 224.3,604.1 222.7,603.5 221.3,602.3 220.0,600.9 218.7,599.5 216.9,599.7 215.2,598.5 213.4,598.3 211.6,598.7 210.2,600.0 208.8,601.3 206.9,601.9 205.4,602.9 203.8,603.6 202.1,604.2 201.4,602.5 200.3,601.1 199.1,599.7 197.3,598.9 196.6,597.1 198.1,596.3 199.3,595.1 200.5,593.9 202.0,593.1 202.9,591.6 204.9,591.9 206.7,592.8 208.4,594.0 209.3,596.1 210.8,597.9 212.6,598.2 214.4,597.7 216.1,597.1 217.9,597.1 219.6,595.9 221.3,594.7 222.7,593.2 222.2,591.5 222.5,589.7 222.7,588.0 224.1,586.9 225.6,586.0 227.4,585.6 229.0,584.8 227.0,584.4 225.4,583.2 225.7,581.5 226.6,580.1 228.3,578.9 230.4,578.7 232.2,577.7 232.0,575.8 233.2,574.2 233.0,572.3 233.7,570.6 233.1,569.0 234.2,567.4 233.7,565.8 232.0,565.6 230.7,564.2 229.1,563.7 227.6,563.1 225.7,563.4 224.3,562.5 222.7,561.9 220.9,562.0 219.4,560.6 217.6,560.3 215.9,560.1 214.1,560.0 212.4,559.5 211.8,557.6 211.6,555.6 210.2,554.5 208.4,554.0 206.9,553.1 205.3,552.4 204.9,550.4 205.3,548.4 205.5,549.4 203.7,549.0 202.0,548.4 200.7,547.0 199.0,546.4 197.2,546.1 195.9,544.6 194.1,544.3 193.2,542.8 192.8,541.2 191.8,539.7 191.6,538.0 192.6,536.1 194.5,534.8 195.4,532.9 193.6,531.8 191.8,530.7 190.3,529.1 190.1,527.5 189.7,525.9 190.2,524.2 189.1,522.6 189.9,520.9 188.7,519.4 189.0,517.7 187.3,516.6 185.3,516.3 183.3,516.2 181.5,515.2 179.9,514.3 178.2,513.5 176.6,512.6 175.1,511.4 174.4,509.8 174.2,508.2 174.6,506.4 174.3,504.8 173.8,503.1 172.5,501.7 172.6,500.0 172.0,498.4 172.4,496.6 171.1,495.2 171.3,493.4 172.0,491.6 172.0,489.5 173.3,487.8 173.2,485.8 172.8,483.8 173.9,482.0 173.5,480.1 173.9,478.2 175.2,477.1 176.7,476.1 178.6,476.3 180.0,475.2 181.5,474.4 179.5,474.2 177.7,473.2 177.4,471.5 177.7,469.7 177.0,468.1 175.5,469.0 173.6,469.3 172.0,470.0 172.8,468.4 174.1,467.0 175.8,466.1 176.9,464.7 177.6,463.0 178.6,461.5 180.2,460.5 180.7,458.8 182.1,457.8 183.0,456.4 183.6,454.8 184.5,453.4 185.8,452.3 186.8,451.0 187.9,449.7 188.5,448.1 189.1,446.5 190.3,445.3 189.0,444.1 188.9,442.2 187.7,441.0 187.2,439.3 185.7,438.2 185.3,436.5 185.7,434.7 185.1,432.9 185.7,431.2 185.7,429.4 185.3,427.6 184.6,426.0 183.5,424.5 183.8,422.5"/>
<polygon points="370.9,232.3 372.4,233.0 373.6,234.1 375.4,234.3 376.9,235.0 378.2,236.0 378.1,237.9 378.8,239.6 379.2,241.4 379.1,243.3 378.1,244.8 376.8,246.0 376.1,247.8 374.6,248.8 373.0,249.3 371.5,249.9 369.9,250.3 368.4,251.3 366.7,251.1 365.1,251.6 363.6,252.4 361.9,253.0 360.7,254.4 358.9,255.0 357.6,256.2 355.9,256.7 354.5,257.9 353.4,259.2 351.5,259.4 350.1,260.2 349.0,261.6 347.6,262.5 346.2,263.3 344.9,264.3 343.5,265.2 342.7,266.7 340.9,267.1 340.3,268.9 339.2,270.0 338.1,271.3 336.9,272.3 335.3,273.0 334.4,274.4 333.6,275.9 332.4,277.0 330.8,277.7 330.0,279.2 329.0,280.5 327.4,281.1 326.3,282.3 325.2,283.5 324.3,285.1 323.2,286.5 322.8,288.4 321.2,289.6 320.4,291.2 320.1,293.2 318.8,294.5 318.7,296.2 317.8,297.6 317.3,299.2 317.0,300.8 316.6,302.4 315.8,303.9 315.2,305.4 315.2,307.1 314.3,308.5 313.6,310.0 314.0,311.8 313.1,313.2 312.5,314.8 312.4,316.4 312.9,318.2 312.3,320.1 312.4,321.9 313.1,323.7 313.2,325.6 313.3,327.4 313.6,329.1 314.6,330.5 315.4,332.0 315.5,333.8 316.3,335.3 317.4,336.7 317.9,338.3 319.1,339.6 319.9,341.2 320.7,342.7 321.1,344.5 322.5,345.7 320.8,345.7 319.1,345.9 317.4,346.3 315.7,346.5 314.2,347.7 312.4,347.5 310.9,346.9 309.6,345.8 308.0,345.2 306.2,345.3 304.8,344.5 303.3,343.8 302.4,342.4 301.1,341.3 300.2,339.9 298.8,338.9 298.0,337.3 297.0,336.0 296.0,334.7 294.9,333.4 294.4,331.8 294.6,329.9 293.8,328.5 293.4,326.9 292.3,325.5 293.1,324.0 294.0,322.5 294.8,320.9 295.4,319.3 295.3,317.4 296.6,316.0 296.9,314.3 297.8,312.8 298.6,311.2 298.8,309.4 299.7,307.9 300.7,306.4 301.0,304.7 301.2,302.9 302.1,301.4 302.6,299.7 303.3,298.1 304.4,296.7 304.5,294.8 305.2,293.2 306.2,291.8 306.4,289.9 307.5,288.5 308.6,287.1 308.8,285.3 309.2,283.7 309.4,282.0 310.0,280.4 310.4,278.8 310.4,277.1 310.8,275.5 311.2,273.8 311.8,272.3 312.4,270.7 313.6,269.5 314.8,268.3 316.1,267.2 317.2,266.0 318.8,265.2 320.3,264.4 321.4,263.1 322.7,262.0 324.0,260.9 325.2,259.7 326.3,258.4 327.9,257.7 329.0,256.4 330.4,255.4 331.7,254.3 332.9,253.1 334.0,251.9 335.3,250.8 336.5,249.7 338.0,248.8 339.6,248.4 341.2,247.8 342.8,247.5 344.3,246.4 346.0,246.3 347.7,246.4 349.1,245.3 350.8,245.1 352.3,244.3 353.6,243.5 354.9,242.5 356.8,242.3 357.8,240.8 359.5,240.5 360.6,239.1 361.9,238.2 363.6,237.8 365.3,237.0 366.5,235.5 367.7,234.1 369.4,233.3"/>
<polygon points="508.8,115.6 509.8,116.9 510.4,118.5 511.9,119.5 512.7,120.9 512.9,122.7 514.0,124.0 515.4,125.0 516.1,126.5 517.0,127.9 517.6,129.4 518.6,130.8 519.3,132.3 520.2,133.6 521.4,134.8 520.1,136.0 518.7,137.0 517.6,138.4 517.2,140.2 517.0,142.0 517.2,143.9 516.7,145.7 516.9,147.5 515.2,148.0 513.5,148.4 512.2,149.9 510.3,149.8 509.1,151.3 507.1,151.2 505.6,152.1 504.0,152.8 502.4,153.5 501.3,152.2 499.7,151.6 498.2,150.9 497.1,149.6 495.7,148.7 494.2,148.0 492.7,147.3 491.3,146.3 490.0,145.4 491.1,144.1 492.4,143.0 493.1,141.5 494.3,140.3 495.5,139.1 496.5,137.7 497.6,136.4 499.0,135.5 499.9,134.0 498.9,132.5 497.3,131.5 496.0,130.3 494.8,129.0 495.7,127.6 497.0,126.6 498.0,125.4 499.5,124.6 500.7,123.5 501.5,122.0 503.3,121.5 504.0,119.9 505.6,119.2 506.7,118.1 508.0,117.1"/>
<polygon points="489.0,155.6 490.9,155.5 492.6,155.9 494.4,156.6 496.3,155.9 498.1,156.1 499.9,156.8 500.5,158.7 501.2,160.6 499.7,161.4 498.0,161.7 496.5,162.6 495.1,163.6 493.6,164.4 492.0,162.7 489.8,161.9 489.6,159.8 489.3,157.7"/>
<polygon points="505.0,154.3 506.7,154.0 508.2,153.1 509.8,152.5 511.5,152.2 513.1,151.4 514.9,151.5 516.4,150.5 518.3,151.0 520.2,151.2 522.2,151.0 524.0,151.8 525.6,152.7 527.1,153.7 528.5,154.9 530.0,155.9 531.5,156.8 531.6,158.5 532.0,160.0 533.0,161.4 533.6,162.9 534.0,164.4 533.0,165.9 531.7,167.3 531.4,169.3 530.3,170.8 530.4,172.5 530.3,174.3 531.1,176.0 531.1,177.7 530.5,179.5 530.8,181.3 531.3,183.0 531.5,184.7 530.5,186.3 528.7,186.9 527.7,188.5 526.0,187.8 524.3,187.2 522.6,186.5 520.8,186.1 518.9,186.0 517.4,185.4 515.8,185.1 514.4,184.3 513.0,183.5 511.5,182.8 510.0,182.2 508.5,180.5 507.5,178.4 506.3,177.1 505.9,175.4 505.0,173.9 504.0,172.5 503.7,170.7 502.4,169.5 500.6,168.1 498.6,167.0 499.1,165.1 500.4,163.8 501.7,162.4 502.4,160.6 502.9,158.9 503.9,157.5 503.8,155.7"/>
<polygon points="544.2,170.8 545.8,171.7 546.9,173.2 548.6,174.0 550.0,175.2 551.8,175.8 553.1,177.1 554.2,178.6 555.2,180.1 556.5,181.4 557.2,183.1 558.3,184.5 559.4,186.0 559.1,187.8 559.8,189.4 560.1,191.0 560.7,192.7 560.9,194.4 560.7,196.1 559.0,196.8 557.7,198.4 556.1,199.3 554.3,199.9 552.8,200.7 551.1,200.8 549.5,201.0 548.0,201.7 546.3,202.0 545.0,203.2 543.4,203.7 541.7,203.7 540.1,204.1 538.9,205.3 537.2,205.6 535.9,206.7 534.6,207.6 533.1,208.2 531.5,208.7 529.9,207.8 529.0,206.2 530.0,204.8 530.3,203.1 530.7,201.4 531.4,199.8 532.0,198.2 532.3,196.5 533.8,195.2 534.0,193.5 534.6,192.0 535.5,190.5 535.4,188.8 536.1,187.2 536.2,185.5 536.4,183.9 537.9,182.6 537.9,180.9 539.0,179.6 539.2,177.8 540.6,176.5 541.3,175.0 541.7,173.3 542.8,171.9"/>
<polygon points="716.4,251.8 718.2,251.1 720.1,250.7 721.7,249.5 723.6,249.2 725.2,248.0 726.8,248.8 728.2,250.0 729.5,251.3 731.3,251.9 732.7,253.1 734.1,254.3 735.6,253.3 736.6,251.7 738.1,250.7 739.1,249.2 740.6,250.0 741.9,251.0 743.0,252.1 744.4,253.0 745.5,254.3 747.6,254.8 749.7,254.1 751.8,254.3 753.0,255.6 754.6,256.5 755.6,258.1 757.0,259.3 758.2,260.6 759.4,261.9 759.1,263.6 758.3,265.1 756.8,266.3 756.5,268.1 755.6,269.5 753.9,270.3 752.1,270.8 750.3,271.2 748.6,271.8 746.7,272.0 745.3,273.0 743.6,272.9 742.2,273.7 740.7,274.4 739.1,274.6 737.4,274.8 735.8,275.9 734.1,276.1 732.3,275.9 730.8,277.1 729.0,277.1 727.4,276.1 726.2,274.8 724.6,273.8 722.7,273.3 721.4,272.0 720.3,270.6 719.6,268.8 718.3,267.5 717.8,265.6 716.4,264.4 716.1,262.6 716.9,260.8 716.4,259.0 716.1,257.2 716.3,255.4 716.0,253.6"/>
<polygon points="763.5,260.6 765.0,261.7 766.8,262.3 768.0,263.8 769.8,264.4 771.3,265.0 772.9,265.3 774.5,265.7 775.8,266.6 777.4,267.0 779.1,267.2 780.5,268.5 782.4,268.2 783.9,269.2 785.5,269.8 787.3,270.0 788.8,270.8 787.9,272.3 787.7,274.0 786.8,275.5 786.3,277.1 784.5,277.0 782.7,277.3 781.0,277.2 779.2,277.6 777.4,277.1 775.7,276.6 774.6,275.1 772.9,274.7 771.6,273.5 769.8,273.2 768.5,272.0 767.9,270.4 767.1,268.9 766.6,267.3 766.0,265.7 765.0,264.1 763.9,262.5"/>
<polygon points="925.0,336.0 926.1,334.8 927.3,333.8 928.5,332.7 930.0,332.0 931.8,332.2 933.6,331.8 935.4,331.9 937.2,332.4 939.0,332.0 940.1,333.2 941.2,334.3 942.5,335.3 944.0,336.0 943.3,337.9 942.2,339.5 941.0,341.0 939.4,341.8 937.6,341.5 936.0,341.8 934.4,342.5 932.7,342.8 931.0,343.0 929.4,342.5 927.7,342.1 926.0,342.0 925.4,340.0 925.7,337.9"/>
<polygon points="743.8,528.5 745.7,528.3 747.6,528.5 747.6,530.1 748.2,531.7 748.3,533.4 747.6,535.1 747.9,536.7 748.0,538.3 748.8,539.9 749.0,541.5 748.9,543.2 749.0,544.8 749.0,546.4 749.0,548.1 749.5,549.7 749.3,551.3 749.0,553.0 749.3,554.6 750.2,556.0 750.1,557.7 750.9,559.1 751.3,560.7 752.4,562.0 752.8,563.6 753.1,565.2 754.0,566.5 754.9,567.9 754.6,569.7 755.2,571.2 756.1,572.6 754.3,572.0 752.5,571.4 751.2,569.8 749.3,569.3 748.7,571.0 748.8,572.9 748.1,574.6 747.8,576.4 746.6,578.0 746.7,579.9 745.9,581.6 746.4,583.4 747.5,584.9 749.0,586.1 749.3,588.0 750.4,589.5 750.0,591.2 749.3,592.9 747.6,592.6 745.9,592.5 744.2,593.1 742.5,592.9 742.0,591.2 743.0,589.4 742.4,587.7 743.0,586.0 742.7,584.2 742.8,582.5 742.9,580.7 742.6,579.0 742.4,577.3 742.0,575.5 742.5,573.8 742.6,572.2 742.3,570.6 742.3,569.0 742.7,567.3 741.7,565.8 742.3,564.1 741.4,562.6 742.1,560.9 742.1,559.3 741.5,557.7 741.7,556.1 742.1,554.5 741.6,552.9 741.4,551.3 741.6,549.7 741.5,548.0 741.4,546.4 741.9,544.8 742.2,543.1 742.1,541.5 742.4,539.9 742.4,538.2 743.2,536.7 743.3,535.0 743.0,533.4 743.2,531.7 743.6,530.1"/>
<polygon points="132.6,526.0 133.8,524.7 135.5,523.8 136.3,522.1 137.7,520.9 139.2,520.4 140.9,520.7 142.3,519.5 144.0,519.6 145.9,521.0 147.8,522.2 148.6,524.0 149.0,526.0 147.5,527.0 146.5,528.5 144.7,528.3 142.9,527.8 141.1,528.3 139.3,527.6 137.5,527.5 135.7,527.4 133.9,527.2"/>
<polygon points="731.5,291.5 733.2,292.0 734.8,292.2 736.6,291.6 738.3,292.0 740.0,292.3 741.7,292.3 743.4,292.3 745.0,293.0 746.0,294.3 746.8,295.7 747.1,297.4 748.1,298.7 749.2,299.9 749.7,301.5 750.3,303.0 748.4,303.4 746.6,303.9 744.8,304.6 743.0,305.1 741.0,305.0 739.1,305.1 737.5,303.7 735.7,303.5 733.7,303.8 732.0,303.0 732.2,301.3 732.4,299.7 731.9,298.1 731.3,296.4 731.6,294.8 731.5,293.1"/>
<polygon points="589.8,283.0 591.3,282.3 592.9,282.2 594.3,281.3 596.0,281.4 596.9,283.2 598.5,284.6 599.9,286.0 598.4,286.6 596.7,287.1 595.4,288.1 594.0,289.0 592.7,287.7 591.7,286.2 590.5,284.7"/>
<polygon points="589.8,282.0 591.5,281.5 593.2,282.3 594.8,282.4 596.5,281.8 598.2,281.7 599.9,282.0 599.1,284.0 598.3,285.9 598.0,288.0 596.4,287.5 594.8,288.4 593.2,287.7 591.6,287.6 590.0,288.0 590.2,286.0 589.7,284.0"/>
<ellipse cx="221.5" cy="423" rx="3.5" ry="4.5"/>
<ellipse cx="279" cy="369" rx="5" ry="5.5"/>
<ellipse cx="387.5" cy="304" rx="3.5" ry="3.5"/>
<ellipse cx="429.5" cy="311" rx="2" ry="3"/>
<ellipse cx="569" cy="205.5" rx="3.5" ry="2"/>
<ellipse cx="735.2" cy="289" rx="2.5" ry="3.5"/>
<ellipse cx="479.6" cy="226" rx="1.5" ry="2"/>
<ellipse cx="443.6" cy="264.3" rx="1.5" ry="2"/>
<ellipse cx="512.6" cy="231" rx="2" ry="2.2"/>
<ellipse cx="852" cy="487" rx="3" ry="2"/>
<ellipse cx="720.5" cy="523.5" rx="1.5" ry="2.5"/>
<ellipse cx="846.5" cy="509.5" rx="1.5" ry="2.5"/>
<ellipse cx="185.3" cy="478" rx="1.8" ry="1.8"/>
<ellipse cx="221.9" cy="514.8" rx="2.3" ry="2.3"/>
<ellipse cx="172.6" cy="494.4" rx="1" ry="1.5"/>
</g>
<g fill="none" stroke="#000" stroke-width="1.5" stroke-linejoin="round">
<polyline points="180.2,400.0 182.2,399.8 184.2,400.6 186.3,400.2 188.3,400.4 190.3,400.7 191.6,403.9 193.5,403.6 195.4,403.2 195.9,401.3 196.6,399.4"/>
<polyline points="256.1,404.5 257.7,405.5 259.6,405.5 261.4,405.9 262.9,407.1 264.6,407.8 266.3,408.3 268.3,409.3 270.4,409.8 272.6,410.2 274.9,409.5 277.1,408.5 279.0,407.0 280.6,405.9 282.1,404.8 283.5,403.4 285.2,402.4 286.9,401.6 288.2,400.0 290.1,399.5 291.6,398.2 293.3,396.3 295.4,395.0 297.3,395.0 299.1,395.7 301.0,394.8 302.8,394.8 304.7,395.3 306.5,395.1 308.3,395.8 310.2,395.1 312.0,396.1 313.9,396.2 315.7,396.2 317.6,395.9 319.5,395.8 321.3,396.3 323.1,396.2 325.0,396.3 326.9,396.1 328.7,396.0 330.6,396.0 332.5,396.2 334.3,396.3 336.2,396.3 338.1,395.5 339.9,395.5 341.8,395.7 343.0,394.2 344.4,392.8 345.5,391.2 346.6,389.6 347.8,388.0 349.3,386.7 350.6,385.3 352.3,384.2 353.5,382.7 354.8,381.2 356.1,379.8 357.0,378.0 357.5,376.1 357.1,374.2 357.3,372.3 356.5,370.4 357.2,368.5 357.0,366.6"/>
<polyline points="279.0,407.0 279.0,408.9 279.4,410.8 279.2,412.7 278.9,414.6 279.5,416.5 279.6,418.4 281.5,419.1 283.5,419.3 285.3,420.0"/>
<polyline points="357.0,366.6 357.8,368.3 357.9,370.3 359.4,371.7 359.8,373.6 360.0,375.5 360.8,377.2 361.8,378.8 361.9,380.8 362.8,382.5 363.3,384.3 362.7,386.3 362.4,388.4 361.8,390.4 361.2,392.4 360.8,394.4 359.5,395.9 358.3,397.6 356.8,398.9 354.8,399.8 353.6,401.5 352.6,403.3 350.5,404.1 349.4,405.8 348.6,407.5 347.7,409.1 346.3,410.3 345.5,412.0 344.3,413.4 343.0,415.1 341.6,416.7 340.6,418.5 339.0,420.0"/>
<polyline points="430.0,320.5 431.1,322.0 432.7,323.0 433.5,324.7 434.7,326.1 433.3,327.4 432.3,329.2 430.7,330.3 429.3,331.6 430.9,332.8 431.8,334.6 432.6,336.4 434.1,337.7 435.2,339.3 436.6,340.7 436.5,342.8 437.5,344.8 436.7,346.9 437.5,348.9 435.9,349.8 434.8,351.4 432.9,351.9 431.7,353.4 430.2,354.4 429.1,356.5 430.4,358.2 430.5,360.5 431.9,362.2 432.9,364.0 434.9,364.6 437.0,364.1 438.9,365.1 441.0,364.6 443.0,365.3 444.0,367.2 444.7,369.3 445.8,371.2 445.9,373.4 446.8,375.4 446.3,377.3 445.5,379.0 444.3,380.7 443.8,382.6 443.0,384.3 443.3,386.3 444.3,388.0 444.8,389.9 445.8,391.7 446.1,393.6 446.9,395.4 448.3,397.0 448.4,399.1 449.4,400.8 448.0,399.1"/>
<polyline points="586.0,295.3 586.3,297.1 585.9,299.0 586.1,300.8 586.1,302.7 587.0,304.5 586.8,306.4 586.5,308.2 586.4,310.1 586.7,311.9 587.6,313.7 587.2,315.6 588.0,317.5 589.4,319.0 589.9,321.0 590.6,323.0 592.2,324.4 592.3,326.6 593.6,328.2 593.6,330.3 594.3,332.2 594.7,334.3 594.6,336.4 594.8,338.4 593.2,339.5 592.0,341.1 591.0,342.8 589.6,344.3 588.2,345.6 586.3,346.4 585.4,348.3 583.7,349.3 582.5,350.9 580.8,352.0 579.6,353.5 578.2,354.6 576.8,355.9 574.8,356.2 573.5,357.5 571.9,358.4 570.4,359.3 568.8,360.2 567.8,362.1 566.1,362.8 564.5,363.7 565.0,365.5 564.8,367.4 564.6,369.3 564.8,371.1 565.8,372.9 565.8,374.8 565.3,376.7 565.6,378.5 566.1,380.4 566.2,382.2 566.7,384.1 566.1,386.0 566.8,387.8 566.4,389.7 567.0,391.5 565.3,392.7 564.1,394.4 562.4,395.5 560.7,396.6 562.6,398.1 564.1,400.0 564.0,402.0 564.6,403.8 565.5,405.6 565.7,407.5 565.8,409.5 566.0,411.4 566.2,413.3 566.6,415.2 565.9,416.9 565.0,418.6 564.5,420.5 563.1,421.9 562.5,423.7 561.5,425.3 563.5,425.5 565.1,426.7 566.7,428.0 568.9,427.8 570.7,428.6 572.3,429.8 574.2,430.4 572.4,431.3 570.5,431.9 568.5,432.3 566.6,432.9 566.7,434.8 566.2,436.7 566.1,438.6 565.4,440.5 565.2,442.4 566.1,444.3 565.4,446.2 565.3,448.1 564.0,449.5 562.8,451.0 561.8,452.7 560.8,454.4 559.7,456.0 558.8,457.7 557.8,459.3 556.5,460.8 556.1,462.6 556.0,464.5 555.8,466.3 556.1,468.2 556.2,470.0"/>
<polyline points="574.2,430.4 575.0,432.2 575.2,434.3 575.8,436.2 576.7,438.0 577.4,439.8 578.0,441.7 579.0,443.3 579.6,445.2 580.4,447.0 581.5,448.6 581.8,450.6 582.4,452.3 582.9,454.0 582.7,456.0 583.7,457.6 584.3,459.3 584.9,461.0 585.4,462.8 585.6,464.6 584.9,466.5 584.2,468.4 583.0,470.0"/>
<polyline points="448.0,399.1 448.9,400.0 449.7,402.0 449.0,404.1 449.7,406.1 449.9,408.1 450.1,410.1 451.3,411.4 452.8,412.5 454.2,413.7 455.2,415.2 455.7,417.3 455.4,419.4 455.2,421.5 457.2,422.0 458.9,423.0 460.9,423.5 462.8,424.1 462.3,426.3 463.0,428.5 462.3,430.7 462.8,432.9 462.1,434.8 462.0,436.8 461.3,438.7 460.3,440.5 459.5,442.3 458.3,443.9 458.2,446.0 457.0,447.6 456.6,449.5 455.8,451.3 456.9,453.2 459.0,454.3 460.0,456.2 461.1,458.1 462.8,459.5 461.3,461.0 459.7,462.2 458.2,463.7 456.5,464.8 454.6,465.8 455.2,467.5 455.1,469.4 456.0,471.1 456.2,472.9 456.5,474.7 458.6,474.6 460.5,475.3 462.5,475.8 464.6,475.8 466.6,475.9 468.3,476.7 469.4,478.2 470.7,479.5 472.4,480.3 474.2,480.9 475.4,482.3 473.6,480.9 471.4,480.0 473.6,481.6 476.1,482.4 475.2,484.3 474.4,486.3 473.0,487.9 473.3,490.2 473.0,492.6 475.1,493.4 477.1,494.6 479.3,495.0 478.7,497.4 478.5,499.8 477.3,501.4 477.2,503.6 476.1,505.3 476.3,507.2 476.1,509.2 477.2,511.0 478.6,512.5 480.1,514.0 478.8,515.6 477.3,517.0 476.1,518.7 476.5,520.9 477.0,523.0 476.8,525.2 476.9,527.4 477.8,529.5 477.6,531.7 478.3,533.8 478.5,536.0 478.5,537.8 478.4,539.6 478.8,541.4 478.5,543.2 476.9,544.4 475.3,545.6"/>
<polyline points="823.7,404.2 825.2,405.5 825.5,407.6 827.0,409.0 827.7,410.8 829.7,411.8 830.3,413.7 831.3,415.4 832.6,416.8 834.4,417.5 836.3,418.1 838.0,419.0 839.8,419.8 841.3,421.3 843.4,421.4 844.8,423.0 846.7,423.5 848.7,423.4 850.7,423.5 852.7,423.6 854.6,423.6 856.6,423.7 858.6,423.5 860.3,424.5 862.2,425.1 863.7,426.4 865.7,426.8 867.3,428.1 869.0,429.0 870.8,429.9 872.7,430.3 874.4,431.4 874.1,433.4 873.9,435.4 874.5,437.3 874.6,439.3 874.4,441.3 875.7,442.6 876.7,444.3 878.6,445.0 880.0,446.2 881.0,447.9 882.3,449.2 884.3,449.4 886.2,449.5 888.2,449.0 890.2,449.7 892.2,448.9 894.1,449.5 896.1,448.7 898.1,449.2 899.6,450.9 900.5,453.0 901.5,454.9 902.1,457.1"/>
<polyline points="846.7,423.5 846.3,425.3 845.9,427.1 846.0,428.9 844.8,430.6 845.1,432.5 845.0,434.3 844.6,436.1 843.6,437.8 843.1,439.5 843.5,441.5 842.8,443.2 843.6,445.1 843.0,447.2 843.8,449.1 843.2,451.2 844.0,453.1 844.1,455.1 844.6,457.0 844.7,459.0"/>
<polyline points="823.0,380.0 821.9,381.9 821.5,384.0 820.9,386.0 820.0,387.9 820.4,389.8 822.1,391.0 822.3,393.0 823.8,394.3 824.0,396.2 825.0,397.8 824.9,399.8 824.1,401.7 824.7,403.8 824.0,405.7"/>
<polyline points="824.0,405.7 822.1,405.6 820.2,405.8 818.4,405.2 816.5,405.2 814.6,405.6 812.7,406.0 810.8,406.0 809.0,406.0 807.1,405.8 805.2,405.7 804.3,407.3 803.2,408.7 801.6,409.8 800.6,411.3 799.7,412.9 798.0,413.8 797.3,415.6 796.9,417.7 795.9,419.5 795.7,421.6 794.3,423.3 793.7,425.3 793.4,427.4 791.6,427.7 789.8,427.1 788.0,427.0 786.1,427.6 784.3,427.6 782.5,427.4 780.7,427.0 778.9,427.8 777.0,427.2 775.2,427.3 773.4,427.5 771.6,427.4 769.9,428.2 768.0,428.7 766.7,430.3 764.7,430.5 763.2,431.8 761.3,432.3 759.8,433.4 759.1,435.1 759.6,437.0 758.6,438.7 758.2,440.5 758.7,442.4 758.7,444.2 758.3,446.0 757.1,447.6 757.9,449.6 756.6,451.2 756.8,453.1 758.3,454.5 758.9,456.5 760.6,457.8 761.7,459.5 762.4,461.5 763.7,463.0 763.1,465.2 761.9,467.0 760.4,468.7 759.8,470.9 760.6,472.7 761.4,474.4 762.3,476.1 764.2,477.2 765.0,479.0 765.7,480.8"/>
<polyline points="668.0,559.0 668.7,560.9 669.9,562.6 671.5,564.0 672.1,566.0 673.1,567.8 675.0,567.7 676.9,568.0 678.8,567.9 680.7,567.9 682.6,569.2 684.5,568.6 686.4,569.4 688.3,569.1"/>
<polyline points="685.3,513.9 685.6,511.9 686.7,510.1 687.0,508.1 688.0,506.3 688.5,504.3 689.5,502.5 689.7,500.4 689.1,498.2 689.8,496.1 689.5,494.0 690.5,492.4 691.2,490.5 692.4,489.0 693.6,487.5 695.0,486.1 695.4,484.1 696.6,482.6 698.5,482.3 700.4,483.1 702.3,483.0 704.2,482.9 706.1,482.4 708.0,482.6 709.6,481.6 711.5,480.9 713.1,480.0 714.9,479.3 716.9,479.0 718.6,478.2 720.4,477.7 722.2,476.9 722.0,475.1 721.7,473.2 722.4,471.4 722.4,469.6 722.2,467.8 722.3,465.9 722.2,464.1 723.5,462.8 724.9,461.6 725.9,460.1 726.9,458.6 727.8,456.9 728.9,455.5 730.1,454.1 731.7,453.1 732.4,451.2 733.6,449.9 735.4,450.6 737.1,451.5 738.9,452.1 740.2,453.8 742.2,454.1 744.3,454.0 746.1,455.1 748.0,455.9 750.2,455.6 752.1,456.3 753.7,455.3 755.2,454.1 756.8,453.1"/>
<polyline points="180.2,461.1 182.1,461.5 183.9,462.2 185.7,462.8 187.1,464.3 188.9,464.9 190.7,465.7 192.8,465.5 194.3,466.9 196.2,467.2 197.9,468.1 199.7,466.8 201.3,465.2 203.0,463.7 205.2,463.2 207.5,463.6 209.5,462.2 211.8,462.4 213.7,461.9 215.5,461.2 217.1,460.1 219.0,459.5 220.7,458.6 223.2,458.0"/>
<polyline points="213.7,436.5 214.1,439.2 215.6,441.5 217.1,442.6 218.0,444.2 219.2,445.5 220.7,446.6 221.2,448.5 221.3,450.4 222.1,452.3 222.3,454.2 222.7,456.1 223.2,458.0 223.7,460.0 224.7,461.7 225.0,463.7 225.8,465.6 227.9,466.5 230.1,467.0 232.1,468.1 234.0,467.9 235.9,467.2 237.9,467.6 239.7,466.8 241.6,466.8 243.5,466.2 245.4,465.9 247.3,465.6 249.2,465.0 251.2,464.7 253.3,465.3 255.2,464.5 257.2,464.3 259.2,464.0 261.2,463.7 263.4,464.2 265.7,463.7 267.9,463.8 270.1,464.3 272.3,464.5 274.5,464.0 276.7,464.0 278.9,463.7 281.5,461.8 281.8,459.9 281.8,458.0 281.6,456.1 280.6,454.2 280.9,452.3 281.3,450.4 281.2,448.5 280.8,446.6 278.5,446.7 276.4,446.0 275.4,448.1 274.1,449.9 272.6,451.6 271.4,449.7 270.8,447.5 270.1,445.3 270.1,443.3 269.5,441.5 269.1,439.6 268.8,437.7 266.9,436.4 265.6,434.6 264.5,432.6 262.5,431.4 264.5,430.3 266.3,428.9 268.5,428.8 270.7,428.9 272.9,429.2 275.1,428.9 277.2,428.5 279.1,427.3 281.3,427.2 283.2,426.2 285.3,425.7 285.3,423.8 285.0,421.9 285.3,420.0"/>
<polyline points="211.8,463.0 211.7,464.9 211.6,466.8 211.3,468.7 211.5,470.7 211.1,472.5 210.6,474.4 210.8,476.3 211.7,478.1 211.8,480.0 211.8,482.0 209.8,482.4 208.0,483.3 206.1,483.2 204.2,482.9 202.3,482.6 200.5,481.7 198.4,482.2 196.6,481.4 194.5,481.5 192.4,481.4 190.3,482.0 189.3,483.7 187.8,485.1 186.3,486.4 185.2,488.0 184.0,489.6 182.2,489.1 180.2,488.8 178.6,487.8 176.8,487.2 175.1,486.2 173.2,485.8"/>
<polyline points="208.0,483.3 209.6,484.1 211.1,485.3 212.5,486.5 213.9,487.7 215.6,488.4 217.5,487.9 219.4,487.6 221.3,487.5 223.2,487.1 225.2,487.2 226.9,486.1 229.0,486.6 230.8,485.8 232.6,486.7 234.6,487.0 236.4,487.9 238.4,488.4 239.8,486.7 241.2,484.9 243.3,483.8 244.7,482.0 246.6,482.1 248.5,482.5 250.4,482.6 252.2,483.3 254.2,483.4 256.1,483.3 258.0,482.3 260.2,482.4 262.2,481.8 264.3,481.3 266.3,480.8 268.5,479.2 270.1,477.0 269.6,474.9 269.2,472.7 268.8,470.6 269.7,468.6 269.6,466.4 270.1,464.3"/>
<polyline points="270.1,464.3 270.2,466.2 270.3,468.0 270.0,469.9 270.3,471.7 270.3,473.6 270.8,475.4 271.3,477.3 270.6,479.1 270.9,481.0 270.7,482.9 270.8,484.7 271.6,486.5 271.3,488.4 271.7,490.6 272.0,492.8 271.7,495.0"/>
<polyline points="276.4,464.3 276.1,466.3 276.8,468.3 276.9,470.3 276.1,472.2 276.3,474.2 276.9,476.2 276.4,478.2 277.8,479.6 279.4,480.9 281.1,482.0 282.7,483.3 283.8,481.7 285.7,480.9 286.9,479.4 288.5,478.3 290.2,477.4 291.5,476.0 292.9,474.8 294.1,473.2 294.2,471.0 294.8,468.9 295.4,466.8 297.2,466.1 298.7,464.8 300.9,465.0 302.3,463.5 304.2,463.0 305.9,462.2 307.8,461.7 309.6,461.1 311.6,461.2 313.3,460.3 315.1,459.8 316.9,459.2 320.0,459.2"/>
<polyline points="295.4,473.2 297.5,473.5 299.7,473.5 301.7,474.4 302.1,476.3 301.7,478.2 302.0,480.1 302.2,482.0 303.0,483.9 303.0,485.8 303.5,487.7 303.8,489.6 303.4,491.5 303.7,493.4 303.8,495.3 303.9,497.2 304.0,499.1 304.2,501.0 304.6,502.8 304.4,504.6 305.3,506.4 304.8,508.3 305.5,510.0"/>
<polyline points="184.0,489.6 184.6,491.5 185.7,493.2 186.1,495.2 186.5,497.2 187.3,499.1 187.8,501.0 188.6,503.2 189.6,505.3 190.3,507.6 190.9,509.5 190.6,511.5 191.5,513.3 191.6,515.2"/>
<polyline points="189.0,503.5 190.9,502.8 192.7,501.9 194.3,500.8 196.0,499.7 198.0,499.2 199.5,497.8 201.4,497.3 203.0,496.0 204.3,494.7 206.1,494.2 207.8,493.5 209.1,492.1 211.1,492.0 212.2,490.3 214.1,490.0 215.6,489.0"/>
<polyline points="320.7,502.3 321.9,500.8 323.9,500.1 325.0,498.5"/>
<polyline points="304.2,512.7 303.6,514.5 302.8,516.2 302.6,518.1 301.8,519.8 301.3,521.6 301.2,523.6 300.4,525.3"/>
<polyline points="306.8,508.9 308.7,508.7 310.6,509.6 312.5,509.0 314.4,510.0 316.3,509.3 318.2,509.4 320.1,509.5 322.0,510.1 325.0,508.9"/>
<polyline points="297.9,526.6 299.0,528.0 300.3,529.4 302.0,530.1 303.2,531.5 304.9,532.4 305.7,534.1 307.2,535.2 309.0,535.9 310.4,537.0 311.3,538.8 313.1,539.4 313.9,541.3 315.7,542.0 317.1,543.2 318.2,544.7 319.7,545.7 320.9,547.0 322.5,547.9 323.3,549.7 325.0,550.6"/>
<polyline points="205.3,552.4 207.2,552.2 209.1,552.8 211.0,552.0 212.9,552.7 214.8,552.4 216.9,552.6 218.9,551.6 220.8,550.9 222.9,551.0 225.0,550.8 225.8,547.6"/>
<polyline points="225.0,550.8 225.7,552.7 226.9,554.4 227.4,556.4 228.6,558.0 229.0,560.0 229.8,561.9 231.6,563.6 233.7,565.0"/>
<polyline points="233.7,565.0 235.4,564.2 237.3,563.6 238.9,562.3 240.8,561.9 241.2,560.0 240.4,558.2 240.8,556.3 242.9,555.4 244.8,554.1 246.4,552.4 248.2,553.6 250.3,554.0 252.3,554.0 254.2,553.8 256.2,553.8 258.2,554.0 259.6,556.1 261.4,557.9 263.1,558.4 264.8,559.3 266.7,558.9 268.4,559.8 270.1,560.3"/>
<polyline points="241.6,561.9 242.2,563.7 243.4,565.1 244.4,566.7 245.7,568.0 246.6,569.6 247.2,571.4 246.2,573.9 244.8,576.1 246.3,577.6 248.1,578.8 250.3,579.4 251.9,580.8 252.6,582.7 254.5,583.7 255.1,585.6 255.1,586.9"/>
<polyline points="251.9,580.8 253.5,579.9 255.3,579.3 256.5,577.7 258.2,576.9 260.0,576.4 261.4,575.2 262.7,573.7 264.4,573.0 266.1,572.2 267.7,570.2 269.3,568.2"/>
<polyline points="258.2,576.9 260.0,578.1 261.2,579.9 263.2,580.8 264.6,582.4 267.7,582.9"/>
<polyline points="255.1,586.9 253.3,588.0 252.0,589.7 250.3,590.8 248.4,591.5 246.3,591.1 244.4,591.8 242.4,591.6 240.8,590.6 239.4,589.4 237.7,588.7 236.1,587.9 234.5,586.9 232.5,586.9 230.8,585.8 229.0,585.3"/>
<polyline points="242.4,591.6 241.2,593.9 239.3,595.6 239.9,597.4 241.2,599.0 241.5,601.0 242.4,602.7 241.2,604.6 239.9,606.4 238.5,608.2"/>
<polyline points="250.3,590.8 251.9,592.0 253.9,592.5 255.6,593.5 256.9,595.3 258.9,595.7 260.3,597.2 262.2,597.9 263.8,598.9 265.8,599.1 267.6,599.3 269.3,600.3"/>
<polyline points="264.6,575.0 265.8,576.8 265.8,579.1 267.3,580.8 267.7,582.9 267.3,584.9 266.9,586.8 266.9,588.9 266.1,590.8 266.9,592.8 268.0,594.6 268.5,596.7 269.3,598.7"/>
<polyline points="262.2,598.7 261.8,600.7 261.5,602.7 261.3,604.7 260.6,606.6 262.5,607.0 264.4,607.4 266.1,608.2 266.1,610.3 265.6,612.2 264.6,614.0 264.6,616.1"/>
<polyline points="242.4,605.0 244.3,605.8 246.0,607.0 248.0,607.4 250.1,606.7 252.4,607.5 254.5,606.8 256.7,606.6 258.6,606.9 260.6,606.6"/>
<polyline points="246.4,607.4 246.3,609.8 246.4,612.2"/>
<polyline points="256.7,606.6 255.4,608.6 254.8,611.0 253.5,613.0 255.8,614.0 258.2,614.5 258.6,612.0 259.8,609.8"/>
<polyline points="228.0,600.0 230.0,599.5 231.9,599.0 234.0,599.1 236.0,599.0 236.5,600.8 237.2,602.4 237.1,604.4 238.0,606.0 235.6,606.9 233.0,607.0 232.6,604.5 232.0,602.0"/>
<polyline points="339.0,420.0 337.0,421.1 334.8,421.6 332.7,422.5 332.1,424.5 331.9,426.6 332.4,428.7 331.9,430.7 331.4,432.7 331.0,434.7 330.4,436.7 331.1,438.8 330.2,440.8 330.1,442.8 330.1,444.7 330.2,446.6 330.9,448.5 330.6,450.4 331.2,452.3 331.4,454.2 330.3,456.0 330.1,458.0 328.1,458.8 326.0,458.0 324.1,458.8 322.0,459.1 320.0,459.2"/>
<polyline points="331.4,454.2 331.9,456.2 331.7,458.2 331.1,460.2 331.2,462.1 331.8,464.1 331.6,466.1 331.4,468.1 330.9,470.2 330.0,472.0 329.1,473.9 328.2,475.8 326.7,477.4 326.3,479.5 326.7,481.4 327.7,483.0 328.9,484.5 329.7,486.2 330.3,488.1 331.4,489.6 329.8,490.8 328.7,492.5 327.5,494.1 326.6,495.9 325.1,497.2 324.4,498.9 323.7,500.7 323.2,502.5 323.5,504.4 322.5,506.1 321.0,508.0 320.0,510.2"/>
<polyline points="332.7,455.4 334.5,456.2 336.4,457.0 337.7,458.7 339.6,459.4 341.3,460.4 343.3,460.7 344.7,462.4 346.6,463.0 346.8,464.9 347.4,466.6 348.2,468.3 348.8,470.1 349.4,471.9 350.3,473.5 351.0,475.2 351.6,477.0 352.9,478.5 354.4,479.8 355.8,481.1 357.7,481.9 358.7,483.7 360.5,484.6 361.7,486.3 362.6,488.2 364.3,489.6 363.6,491.3 361.8,492.3 360.9,493.9 360.3,495.7 358.7,496.8 358.0,498.5 358.3,500.3 358.3,502.2 358.0,504.0 358.3,505.9 358.0,507.7 359.9,509.6 361.8,511.5 363.3,512.7 365.1,513.2 366.8,514.0 368.6,514.5 370.1,515.6 371.8,516.4 373.5,517.0 375.1,518.1 377.0,518.4"/>
<polyline points="364.3,489.0 366.0,488.1 367.2,486.5 368.5,485.0 370.4,484.3 372.0,483.2 373.2,481.6 374.9,480.6 376.5,479.6 378.0,478.4 379.0,476.5 380.8,475.7 382.7,476.3 384.8,476.5 386.6,477.2 388.3,478.6 390.3,478.8 392.2,479.5 393.6,480.9 395.2,482.0 396.7,483.2 398.3,484.3 399.6,485.7 401.0,487.1 402.8,487.9 404.8,488.2 406.8,488.3 408.6,489.0 409.5,487.2 410.9,485.8 412.6,484.5 413.6,482.8 415.1,481.4 416.5,480.0 417.5,478.2 417.5,476.2 418.5,474.4 418.3,472.4 419.5,470.7 419.2,468.6 420.0,466.8 422.0,466.7 423.9,467.7 426.0,467.2 428.0,467.2 429.9,468.2 431.9,468.0 433.9,468.1 435.9,468.8 438.0,468.5 440.0,468.9 442.0,469.6 444.1,469.4 445.6,468.2 447.4,467.3 448.3,465.4 450.0,464.4 451.8,465.7 454.0,466.4"/>
<polyline points="344.3,413.4 345.7,416.0 346.5,417.9 346.6,420.0 347.0,422.1 347.9,424.1 347.8,426.3 349.6,425.9 351.5,426.8 353.3,426.3 355.2,426.6 357.0,426.0 358.9,426.1 360.7,425.9 362.6,426.4 364.4,426.7 366.3,426.3 368.1,426.3 369.1,427.9 369.3,429.9 370.6,431.4 372.5,431.7 374.4,431.3 376.3,430.4 378.2,430.9 380.1,430.5 382.0,430.9 383.9,430.1 385.8,430.1 386.7,431.9 387.8,433.6 389.1,435.1 390.0,436.9 391.0,438.7 392.2,440.3 394.1,441.1 396.2,441.0 398.2,441.2 400.1,442.2 402.2,441.6 404.0,442.8 406.1,442.8 408.0,443.2 409.9,443.3 411.8,443.4 413.7,443.9 415.6,444.3 417.5,444.1 418.9,445.4 420.5,446.5 422.5,447.0 423.8,448.5 425.5,447.5 427.2,446.5 429.4,446.5 431.2,445.6 432.6,444.0 434.6,443.6 436.4,442.8 438.2,441.9 439.8,443.6 440.6,445.8 442.4,445.7 444.3,446.1 446.1,445.8 447.9,446.9 449.9,447.5 451.6,448.6 453.4,450.2 455.6,451.3"/>
<polyline points="408.6,489.0 409.5,490.6 410.0,492.4 410.9,494.1 411.0,496.1 412.1,497.6 412.7,499.4 413.7,501.0 414.9,502.6 414.2,504.3 414.0,506.2 412.9,507.8 412.7,509.7 412.4,511.5 411.4,513.5 411.0,515.8 409.9,517.8 410.9,519.6 411.1,521.6 411.5,523.6 412.1,525.5 413.2,527.2 413.7,529.2"/>
<polyline points="407.3,489.6 405.6,490.4 403.7,490.4 401.7,490.5 400.1,491.7 398.1,491.5 396.4,492.5 394.6,492.8 392.8,493.5 390.9,493.4 388.8,491.7 387.1,489.6 387.0,491.5 386.2,493.3 385.9,495.2 386.6,497.2 386.2,499.1 385.8,501.0 386.7,502.7 388.6,503.5 389.6,505.1 389.3,506.9 388.7,508.6 388.6,510.5 388.0,512.2 387.3,513.9 386.9,515.6 385.8,517.2 385.8,519.1"/>
<polyline points="320.0,510.2 322.0,509.9 324.0,509.9 326.1,510.6 328.1,510.1 330.1,510.2 331.9,510.6 333.7,510.4 335.5,510.5 337.4,510.0 339.2,509.8 341.0,510.5 342.8,510.2 344.8,509.4 346.9,508.7 348.9,508.1 351.0,507.4 352.9,506.4 355.5,506.8 358.0,507.7"/>
<polyline points="344.0,510.2 344.2,512.3 343.5,514.4 344.0,516.5 344.2,518.6 343.9,520.7 344.0,522.8 345.8,523.9 347.0,525.6 349.1,526.2 350.4,527.9"/>
<polyline points="330.1,511.5 330.2,513.7 330.9,515.7 331.4,517.8 329.4,518.5 327.2,518.3 325.4,519.6 323.4,520.1 321.3,520.3 322.9,521.9 323.8,524.1 326.0,524.2 328.2,524.4 330.5,524.3 332.7,524.1 332.3,526.0 331.4,527.8 331.6,529.9 330.9,531.8 330.0,533.6 329.1,535.4 329.0,537.4 328.4,539.2 327.8,541.1 327.6,543.1 326.1,544.2 324.3,544.7 322.9,545.9 321.6,547.3 320.0,548.2"/>
<polyline points="842.7,362.4 843.0,364.4 842.7,366.4 843.4,368.3 843.8,370.3 843.2,372.4 843.8,374.3 844.0,376.3 842.1,376.6 840.1,376.8 838.2,376.9 836.4,378.0 834.5,378.2 832.6,378.8 830.7,378.7 828.7,379.0 826.8,378.9 824.9,379.5 823.0,380.0"/>
<polyline points="630.0,503.6 632.0,503.7 634.1,503.5 636.2,503.7 638.2,503.6 640.1,504.1 641.6,505.4 643.4,506.1 645.1,506.9 647.2,507.0 648.8,508.2 650.6,508.8 651.7,510.3 653.1,511.4 654.1,512.9 655.7,513.9 657.6,514.8 659.7,515.2 661.8,515.8 663.9,516.0 666.0,516.2 668.0,516.4 670.0,515.6 672.1,516.2 674.2,516.2 676.2,516.0 678.1,515.9 679.9,515.4 681.7,514.9 683.7,515.3 685.5,515.0 687.3,515.6 689.2,515.2 691.1,515.3 692.9,515.5 694.7,516.0 696.8,518.5 695.4,520.4 693.3,521.5 691.7,523.2 689.6,524.0 687.9,525.5 686.4,527.2 684.5,528.3 684.8,530.4 685.5,532.4 687.5,533.4 688.7,535.4 690.6,536.5 692.3,536.0 694.0,535.3 695.9,535.6 697.6,534.7 699.4,534.5 701.1,533.9 703.0,534.0 706.0,535.5 706.1,537.6 705.9,539.6 706.0,541.7 703.9,541.9 702.0,543.2 699.8,542.9 697.8,543.7 696.7,545.4 695.3,546.6 693.7,547.8 692.3,549.0 691.3,550.5 690.0,551.8 688.6,553.0 688.5,554.9 688.5,556.9 689.0,558.9 688.6,561.1 689.4,563.1 688.9,565.2 689.2,567.3 689.7,569.3 691.7,569.0 693.5,568.2 695.6,568.7 697.5,568.1 699.3,568.8 700.4,570.4 701.9,571.4 703.6,572.2 704.7,573.9 706.1,575.1 707.7,576.0"/>
<polyline points="556.2,470.0 557.5,471.4 559.1,472.7 560.4,474.1 559.4,476.2 558.2,478.2 557.3,480.3 558.1,482.8 558.3,485.4 556.5,486.7 555.2,488.5 554.4,486.7 553.0,485.4 551.9,483.9 550.2,482.9 549.1,481.3 546.8,481.9 544.9,483.4 544.9,485.6 543.9,487.5 542.9,489.1 542.2,490.9 540.9,492.4 539.6,493.8 538.6,495.4 537.8,497.2 536.7,498.8 535.3,497.5 533.9,496.2 532.8,494.6 531.6,493.1 529.8,493.8 528.0,494.3 526.0,494.1 524.2,494.8 522.3,495.2 521.7,497.1 521.3,499.0 520.3,500.8 520.6,502.9 521.6,504.9 522.1,507.0 522.3,509.1 521.0,510.6 519.6,512.0 518.1,513.3 517.2,515.2 516.7,517.2 516.3,519.3 516.1,521.3 516.2,523.4 516.2,525.5 514.1,525.8 512.1,526.5 513.5,527.8 514.4,529.4 515.6,530.9 516.2,532.7 514.0,533.0 512.0,533.8 510.0,534.7"/>
<polyline points="516.2,532.7 518.0,533.7 520.1,534.2 521.9,535.1 523.9,535.8 525.6,537.1 527.5,537.8 529.4,537.8 531.0,536.6 532.8,535.8 534.7,535.8 536.2,537.0 537.3,538.6 538.0,540.4 539.3,541.8 540.8,543.0 542.3,544.1 544.1,545.0 545.6,546.2 547.1,547.4 548.2,549.2 549.9,550.1 551.4,551.3"/>
<polyline points="527.5,537.8 526.4,540.3 526.4,543.0 527.1,544.9 528.6,546.2"/>
<polyline points="583.0,470.0 582.2,471.8 582.0,473.8 581.1,475.6 581.3,477.6 580.8,479.5 579.9,481.3 581.2,482.7 582.6,484.0 584.0,485.4 585.6,484.4 587.3,483.8 589.0,482.9 591.0,483.1 592.7,482.2 594.3,481.3 594.3,483.9 595.3,486.4 596.9,485.5 597.8,483.8 599.3,482.8 600.4,481.3 601.6,479.7 603.3,478.6 604.7,477.1 605.4,475.1 606.6,473.6 608.1,472.3 609.7,471.0 611.5,471.6 613.3,471.9 615.3,472.1 616.9,473.1 617.2,475.2 617.9,477.3 618.9,479.2 620.7,479.9 622.7,480.3 624.1,481.9 626.1,482.3 626.3,484.2 627.0,486.0 627.0,487.9 626.8,489.8 627.2,491.6 627.5,493.6 628.6,495.4 629.1,497.3 630.2,499.0 630.9,500.9 631.3,502.9 633.4,503.6 635.7,503.3 637.9,503.2 640.0,503.9"/>
<polyline points="627.2,491.6 625.1,491.2 623.0,491.3 621.0,490.6 620.8,492.5 620.0,494.2 619.4,495.9 619.0,497.7 619.1,499.5 619.3,501.3 619.8,503.1 620.0,504.9 618.2,505.4 616.4,504.7 614.6,505.4 612.8,504.9 611.1,504.3 609.3,503.7 607.6,502.9 605.7,503.8 603.9,504.7 602.3,506.2 600.4,507.0 598.8,506.0 597.2,505.2 595.5,504.6 593.7,504.1 592.2,502.9 590.1,502.7 588.1,503.2 586.1,504.0 584.0,504.0 581.9,503.9 580.1,504.5 579.0,506.2 577.4,507.1 575.8,508.0 576.2,509.8 576.8,511.6 577.8,513.2 577.4,515.1 577.0,517.0 577.4,519.0 577.1,520.9 575.9,522.6 575.8,524.6 575.8,526.5 575.6,528.4 574.9,530.1 574.0,531.8 572.6,533.2 572.7,535.2 571.7,536.8 570.1,537.9 568.5,538.9 567.3,540.4 565.6,541.4 564.5,543.0 563.0,544.3 561.4,545.4 559.9,546.6 557.8,546.9 556.5,548.6 554.4,548.8 552.9,550.1 551.4,551.3"/>
<polyline points="610.7,502.9 611.2,504.8 610.6,506.7 611.5,508.6 611.3,510.5 611.8,512.4 611.2,514.3 611.7,516.2 612.7,517.8 614.0,519.1 616.0,519.7 616.9,521.4 615.3,522.7 614.3,524.5 612.7,525.8 611.7,527.6 610.2,528.6 608.6,529.5 607.0,530.6 605.4,531.4 604.3,533.1 602.5,533.7 603.2,535.5 602.9,537.4 603.3,539.3 603.4,541.1 603.5,543.0 602.6,545.0 600.6,546.2 599.5,548.0 597.7,548.8 595.6,548.2 593.8,548.5 591.9,549.1 590.1,549.8 588.1,549.5 586.2,550.2 584.3,550.3 582.5,550.9 580.4,550.2 578.6,551.0 576.7,551.3 576.1,553.4 575.6,555.5 574.2,557.3 573.3,559.2 572.9,561.4"/>
<polyline points="631.3,502.9 631.2,505.0 632.2,506.9 632.2,509.0 632.3,511.1 634.0,511.9 635.2,513.4 637.2,513.9 638.5,515.2 639.1,517.6 640.0,520.0 639.8,522.1 640.3,524.0 641.4,525.9 641.6,527.9 641.9,529.9 641.5,532.0 641.9,534.0 642.3,536.0"/>
<polyline points="706.5,574.9 706.5,576.9 706.5,578.9 706.6,581.0 706.4,583.0 706.5,585.0 708.3,585.6 710.0,586.4 711.8,586.6 713.6,587.2 715.5,587.3 717.3,586.1 718.8,584.6 720.0,582.8 719.9,580.5 718.8,578.3 718.9,576.0 721.2,575.1 723.4,573.8 723.9,575.9 725.2,577.7 725.6,579.8 726.8,581.6"/>
<polyline points="420.0,502.1 422.1,502.0 424.1,503.1 426.3,502.9 427.9,504.0 429.3,505.3 431.2,506.0 432.7,507.2 434.2,508.5 436.4,508.6 438.5,508.8 440.6,509.2 442.7,508.6 444.9,508.8 447.1,509.2 449.2,508.5 449.6,510.6 449.8,512.8 450.8,514.8 452.9,513.8 454.8,512.4 456.7,511.8 458.5,511.0 460.2,509.8 461.6,508.4 463.5,507.7 465.2,507.1 467.1,506.9 468.8,506.2 470.6,506.0 472.6,506.4 474.4,506.1 476.1,505.3"/>
<polyline points="454.8,512.4 455.6,513.2 456.2,515.0 456.2,516.9 456.6,518.7 457.0,520.5 457.5,522.3 458.2,524.0 458.7,525.8 460.4,526.9 461.3,528.9 463.1,529.9 464.3,531.6 465.8,532.9 466.5,534.8 467.0,536.9 467.1,539.0 468.2,540.8 467.8,543.3 466.6,545.6 464.9,546.6 463.1,547.5 461.5,548.6 459.6,549.2 458.2,550.8 456.3,551.3 454.8,552.7 454.0,555.0 454.2,557.4 454.8,559.8"/>
<polyline points="420.0,534.5 423.2,533.7 425.2,533.4 426.6,531.7 428.4,531.0 430.2,530.3 432.3,530.2 433.6,528.5 435.5,527.9 437.4,527.4 438.8,528.8 440.2,530.3 442.4,530.9 443.8,532.4 445.3,533.7 446.7,532.5 448.1,531.2 449.2,529.7 451.0,529.3 452.8,528.7 454.3,527.6 456.1,527.0 457.9,526.6 458.7,525.8"/>
<polyline points="468.2,540.8 470.1,540.9 471.7,542.2 473.6,542.3 475.3,543.2 474.4,545.7 473.0,547.9 474.7,549.5 476.9,550.3 477.7,552.0 478.7,553.5 479.6,555.1 480.6,556.7 481.7,558.2 481.5,560.5 481.7,562.9"/>
<polyline points="477.7,518.7 479.5,518.9 481.4,519.0 483.1,519.4 484.8,520.3 486.5,521.3 487.6,522.9 488.8,524.3 489.8,526.2 490.4,528.3 490.7,530.4 490.8,532.6 491.9,534.5 490.8,536.1 490.3,538.1 488.9,539.5 488.5,541.5 487.7,543.3 486.4,544.8 485.0,546.9 483.2,548.7 481.1,549.3 478.9,549.6 476.9,550.3"/>
<polyline points="486.4,545.6 488.3,546.0 490.1,546.8 492.2,546.5 493.9,547.9 495.9,547.9 497.4,546.4 499.3,545.4 500.3,543.4 502.2,542.4 503.5,540.8 503.9,538.7 505.5,537.3 506.2,535.3 508.2,535.1 510.0,534.5 511.8,533.6 513.7,532.9 515.7,532.9"/>
<polyline points="413.7,501.0 415.9,501.0 417.8,502.2 420.0,502.1"/>
<polyline points="760.4,609.6 763.0,606.5 768.0,603.0" stroke-width="2.2"/>
<polyline points="769.3,602.0 776.0,598.0 780.2,595.0 784.5,592.0" stroke-width="2.2"/>
<polyline points="791.0,586.5 793.0,585.0" stroke-width="2.2"/>
<polyline points="804.7,571.6 805.5,568.5" stroke-width="2.2"/>
<polyline points="808.5,562.8 812.0,560.0 816.1,556.5" stroke-width="2.2"/>
<polyline points="860.5,519.5 863.0,523.5" stroke-width="2.2"/>
<polyline points="868.5,524.5 871.5,527.0" stroke-width="2.2"/>
<polyline points="710.0,286.5 710.8,288.2 711.8,289.7 712.7,291.3 713.8,292.8"/>
<polyline points="220.7,488.4 221.4,490.5 221.9,492.7 221.9,495.0"/>
<polyline points="239.7,488.4 239.2,490.8 237.3,492.6 236.9,495.0"/>
<polyline points="303.0,489.6 300.8,490.1 298.5,490.1 296.3,490.5 294.1,490.9 292.9,492.5 291.6,494.0 289.9,495.0"/>
<polyline points="191.6,515.2 195.0,514.8"/>
<polyline points="195.0,514.8 196.8,513.7 199.1,514.0 200.8,512.6 202.9,512.4 204.9,512.7 206.8,511.9 208.8,512.0 210.8,511.6 211.7,509.8 213.2,508.4 215.1,507.9 216.6,506.6 218.4,505.9 220.2,505.3 221.9,504.5 225.0,505.3"/>
<polyline points="221.9,495.0 223.3,496.6 224.2,498.5 225.0,500.5 225.1,503.0 225.8,505.3 226.3,507.1 226.5,508.9 226.6,510.8 228.2,513.2 230.0,514.0 232.0,514.0 233.7,514.8 234.8,516.6 235.3,518.7 233.9,520.1 232.2,521.2 230.7,522.4 229.0,523.5 228.6,525.6 228.5,527.7 228.2,529.8 227.5,531.8 228.2,534.1 227.4,536.1 226.6,539.3 223.5,539.3 223.3,541.4 223.1,543.5 223.5,545.6 224.5,547.3 225.5,549.0 225.8,551.0"/>
<polyline points="210.8,511.6 211.1,514.0 211.8,516.3 211.6,518.7 210.0,520.0 208.3,521.0 207.1,522.8 205.5,524.1 203.7,525.0 202.5,527.4 201.3,529.8 200.0,531.4 198.3,532.8 196.6,534.0 195.0,535.3"/>
<polyline points="211.6,518.7 214.0,518.3 216.3,518.2 218.7,518.7 220.0,521.0 221.1,523.5 222.9,524.0 224.5,525.1 226.4,525.3 228.2,525.8"/>
<polyline points="220.3,521.1 219.6,523.1 218.4,524.7 216.8,526.2 215.8,528.0 214.8,529.8 214.0,532.1 214.0,534.5 211.8,534.8 210.0,536.1 208.7,534.5 206.6,533.9 205.6,531.9 203.7,531.0 202.1,529.8"/>
<polyline points="214.0,533.7 215.9,534.0 217.7,534.5 219.3,535.8 221.3,535.7 223.1,536.1 224.9,536.9 226.6,537.7"/>
<polyline points="210.0,536.1 209.3,538.1 209.5,540.3 209.2,542.4 208.2,544.3 208.1,546.5 206.9,548.3 206.1,550.3 205.3,552.4"/>
<polyline points="194.5,544.3 196.3,543.9 198.1,543.5 200.0,543.8 201.8,543.2 203.6,542.7 205.6,543.4 207.4,542.6 209.2,542.4 211.2,542.5 213.2,542.8 214.9,543.9 216.9,544.2 219.0,544.2 220.8,545.1 222.7,545.6 224.5,546.1 226.3,546.1 228.1,546.0 229.9,546.5 231.7,546.9 233.5,547.1 235.3,547.2 237.5,547.4 239.3,548.8 241.3,549.5 243.5,549.9 245.6,550.3 247.2,551.6"/>
<polyline points="235.3,518.7 237.4,519.5 239.7,519.4 241.7,520.3 244.0,520.3 245.8,521.2 247.2,522.7 247.1,524.9 246.3,527.0 245.6,529.1 245.6,531.4 243.7,532.2 241.7,532.5 239.8,533.1 237.7,533.0 235.8,533.7 233.8,534.1 231.7,533.8 229.8,534.5 229.1,532.1 228.2,529.8"/>
<polyline points="234.5,535.3 234.3,537.7 235.1,540.0 235.3,542.4 236.5,543.9 238.3,544.7 239.3,546.4"/>
<polyline points="245.6,531.4 245.6,534.5 246.1,536.3 247.7,537.5 248.4,539.2 249.3,540.8 250.3,542.4 249.4,544.3 249.6,546.4 248.6,548.2 248.8,550.3"/>
<polyline points="245.6,532.2 247.5,532.2 249.4,531.6 251.3,532.1 253.2,531.2 255.1,531.4 257.1,531.6 258.9,530.7 260.7,530.1 262.8,530.6 264.6,529.8 265.3,531.5 265.8,533.4 266.4,535.1 266.7,537.1 267.9,538.6 268.1,540.6 268.5,542.4 266.7,542.9 264.8,542.2 263.1,543.2 261.2,542.6 259.4,543.1 257.6,542.9 255.8,542.9 253.9,542.8 252.1,543.5 250.3,543.2"/>
<polyline points="264.6,529.8 265.4,528.0 266.3,526.4 267.7,525.0 266.8,523.3 264.8,522.7 263.8,521.1 262.0,523.0 259.8,524.2 257.8,523.6 255.9,523.0 254.0,522.1 251.9,521.9 249.6,522.8 247.2,522.7"/>
<polyline points="244.0,520.3 244.5,518.3 245.3,516.4 246.5,514.6 247.2,512.7 248.0,510.8 248.3,508.9 249.2,507.2 249.3,505.3 249.9,503.5 250.4,501.7 250.3,499.7 251.9,497.4 254.3,497.1 256.7,497.4 258.2,495.0"/>
<polyline points="232.9,506.1 234.6,506.9 236.5,506.7 238.4,506.6 240.1,507.9 242.0,507.3 243.9,507.5 245.6,508.4 248.8,509.2"/>
<polyline points="232.2,506.1 232.2,502.9 233.9,501.9 235.8,501.1 237.7,500.5 240.3,499.8 242.4,498.2 244.3,499.0 246.4,498.9 248.3,499.4 250.3,499.7"/>
<polyline points="237.7,500.5 237.8,498.6 237.5,496.8 236.9,495.0"/>
<polyline points="242.4,498.2 243.2,495.0"/>
<polyline points="263.0,520.3 263.4,518.3 263.4,516.4 263.2,514.3 263.8,512.4 262.7,510.1 262.2,507.6 264.3,506.2 266.1,504.5 267.4,503.0 268.5,501.3 270.0,499.1 270.9,496.6 271.7,495.0"/>
<polyline points="263.8,512.4 265.7,512.4 267.5,512.1 269.1,510.9 270.9,510.8 272.8,512.1 274.1,514.0 273.4,516.3 273.5,518.7 273.3,521.1 271.7,524.2 269.8,524.9 267.7,525.0"/>
<polyline points="266.1,504.5 268.1,504.4 269.9,503.5 271.8,503.2 273.8,503.0 275.7,502.8 277.7,502.6 279.6,502.1 281.3,503.1 282.2,505.0 283.6,506.3 285.1,507.6 283.4,508.7 281.6,509.6 279.8,510.5 278.5,512.3 276.5,513.0 274.8,514.0"/>
<polyline points="285.1,507.6 286.8,509.0 288.5,510.2 290.3,511.3 292.2,512.4 295.0,512.4 297.2,512.1 299.4,513.1 301.7,512.7 302.8,511.1 303.1,509.2 304.2,507.6"/>
<polyline points="289.9,495.0 290.2,497.4 289.9,499.8 290.7,502.1 289.7,503.7 288.4,504.9 286.7,505.9 285.9,507.6"/>
<polyline points="271.7,524.2 273.8,524.6 275.8,523.9 277.9,524.5 279.9,524.0 282.0,524.2 283.4,525.5 285.1,526.6 286.9,526.5 288.6,525.4 290.4,525.1 292.2,525.0 295.0,526.6 297.9,526.6"/>
<polyline points="285.1,526.6 285.0,528.7 284.3,530.6 282.5,531.6 280.7,532.6 278.8,533.3 276.7,533.8 274.8,534.5 275.7,536.3 276.8,538.1 277.2,540.1 278.7,541.2 280.1,542.5 281.9,543.2 283.6,544.0 285.0,545.4 286.8,546.1 288.3,547.2 289.8,545.7 291.6,544.8 293.0,543.2 295.0,542.4"/>
<polyline points="268.5,542.4 270.5,542.0 272.3,540.9 274.4,540.5 276.4,540.1"/>
<polyline points="288.3,547.2 287.8,549.1 288.3,551.0"/>
</g>
</svg>

<!-- vertical scrollbar -->
<div class="a" style="left:1087px;top:42px;width:11px;height:657px;background:#4f4f4f"></div>
<svg class="a" style="left:1088px;top:45px" width="9" height="6" viewBox="0 0 9 6"><path d="M1.5 4.5 L4.5 1.5 L7.5 4.5" stroke="#9a9a9a" stroke-width="1" fill="none"/></svg>
<div class="a" style="left:1088px;top:360px;width:8px;height:17px;background:#606060;border-radius:4px"></div>
<svg class="a" style="left:1088px;top:690px" width="9" height="6" viewBox="0 0 9 6"><path d="M1.5 1.5 L4.5 4.5 L7.5 1.5" stroke="#9a9a9a" stroke-width="1" fill="none"/></svg>
<div class="a" style="left:1098px;top:22px;width:2px;height:689px;background:#3e3e3e"></div>

<!-- bottom status bar -->
<div class="a" style="left:28px;top:699px;width:1070px;height:12px;background:#484848"></div>
<div class="a" style="left:30px;top:700px;width:34px;height:11px;background:#3f3f3f"></div>
<div class="t" style="left:32px;top:702.5px;font-size:7px;color:#e0e0e0">100%</div>
<svg class="a" style="left:65px;top:703px" width="7" height="5" viewBox="0 0 7 5"><path d="M1 1 L3.5 3.5 L6 1" stroke="#c0c0c0" stroke-width="1" fill="none"/></svg>
<div class="t" style="left:80px;top:702.5px;font-size:6px;color:#6e6e6e">|◀ ◀</div>
<div class="a" style="left:104px;top:700px;width:25px;height:11px;background:#3f3f3f"></div>
<div class="t" style="left:106px;top:702.5px;font-size:7px;color:#e0e0e0">1</div>
<svg class="a" style="left:131px;top:703px" width="7" height="5" viewBox="0 0 7 5"><path d="M1 1 L3.5 3.5 L6 1" stroke="#c0c0c0" stroke-width="1" fill="none"/></svg>
<div class="t" style="left:146px;top:702.5px;font-size:6px;color:#6e6e6e">▶ ▶|</div>
<div class="a" style="left:169px;top:700px;width:131px;height:11px;background:#4d4d4d"></div>
<div class="t" style="left:181px;top:702.5px;font-size:7px;color:#cfcfcf">Переключает прямое выделение</div>
<svg class="a" style="left:304px;top:702px" width="5" height="7" viewBox="0 0 5 7"><path d="M0.5 0.5 L4.5 3.5 L0.5 6.5 Z" fill="#d8d8d8"/></svg>
<svg class="a" style="left:316px;top:702px" width="5" height="7" viewBox="0 0 5 7"><path d="M4 1 L1.5 3.5 L4 6" stroke="#8a8a8a" stroke-width="1" fill="none"/></svg>
<div class="a" style="left:692px;top:702px;width:17px;height:6px;background:#666;border-radius:3px"></div>
<svg class="a" style="left:1079px;top:702px" width="5" height="7" viewBox="0 0 5 7"><path d="M1 1 L3.5 3.5 L1 6" stroke="#8a8a8a" stroke-width="1" fill="none"/></svg>
<div class="a" style="left:1087px;top:699px;width:11px;height:12px;background:#535353"></div>

<!-- right panels -->
<div class="a" style="left:1100px;top:22px;width:165px;height:689px;background:#535353"></div>
<div class="a" style="left:1100px;top:22px;width:165px;height:9px;background:#434343"></div>
<div class="t" style="left:1253px;top:23.5px;font-size:6.5px;color:#a8a8a8;letter-spacing:-1px">››</div>
<!-- align panel tabs -->
<div class="a" style="left:1100px;top:31px;width:165px;height:18px;background:#444444"></div>
<div class="a" style="left:1136px;top:31px;width:66px;height:18px;background:#535353"></div>
<div class="a" style="left:1238px;top:31px;width:1px;height:18px;background:#3f3f3f"></div>
<div class="t" style="left:1105.5px;top:36.5px;font-size:7px;font-weight:bold;color:#c4c4c4">Трансфо</div>
<div class="t" style="left:1139px;top:36.5px;font-size:6px;color:#7a7a7a">⬦</div>
<div class="t" style="left:1145px;top:36.5px;font-size:6.8px;font-weight:bold;color:#f0f0f0">Выравнивание</div>
<div class="t" style="left:1207.5px;top:36.5px;font-size:7px;font-weight:bold;color:#c4c4c4">Обработ</div>
<div class="a" style="left:1253.5px;top:38px;width:7px;height:1px;background:#c0c0c0;box-shadow:0 2px 0 #c0c0c0,0 4px 0 #c0c0c0"></div>
<div class="t" style="left:1103px;top:55px;font-size:7px;color:#cdcdcd">Выровнять объекты:</div>
<svg class="a" style="left:1100px;top:66px" width="165" height="16" viewBox="0 0 165 16" fill="#c4c4c4">
 <rect x="5.5" y="2" width="1" height="12"/><rect x="7" y="3" width="5" height="4"/><rect x="7" y="8.5" width="9.5" height="4"/>
 <rect x="34.5" y="1" width="1" height="14"/><rect x="32" y="3" width="5.5" height="4"/><rect x="30" y="8.5" width="9.5" height="4"/>
 <rect x="64.5" y="2" width="1" height="12"/><rect x="58.5" y="3" width="5.5" height="4"/><rect x="54" y="8.5" width="10" height="4"/>
 <rect x="99" y="2" width="12" height="1"/><rect x="100.5" y="3.5" width="4" height="10"/><rect x="106" y="3.5" width="4" height="5.5"/>
 <rect x="122.5" y="7.5" width="12" height="1"/><rect x="124" y="3" width="4" height="10"/><rect x="129.5" y="5" width="4" height="6"/>
 <rect x="146.5" y="13" width="12" height="1"/><rect x="148" y="3" width="4" height="9.5"/><rect x="153.5" y="7" width="4" height="5.5"/>
</svg>
<div class="a" style="left:1103px;top:86px;width:158px;height:1px;background:#484848"></div>
<div class="t" style="left:1103px;top:93px;font-size:7px;color:#cdcdcd">Распределить объекты:</div>
<svg class="a" style="left:1100px;top:105px" width="165" height="15" viewBox="0 0 165 15" fill="#c4c4c4">
 <rect x="5.5" y="1.5" width="12" height="1"/><rect x="8" y="3.5" width="7" height="3"/><rect x="5.5" y="8" width="12" height="1"/><rect x="7" y="10" width="9" height="3.5"/>
 <rect x="29" y="3.5" width="12" height="1"/><rect x="31.5" y="2" width="7" height="3.5"/><rect x="29" y="10" width="12" height="1"/><rect x="30.5" y="8.5" width="9" height="3.5"/>
 <rect x="53" y="13" width="12" height="1"/><rect x="55.5" y="2.5" width="7" height="3.5"/><rect x="53" y="6.5" width="12" height="1"/><rect x="54.5" y="8" width="9" height="4"/>
 <rect x="99" y="1" width="1" height="13"/><rect x="100.5" y="2.5" width="3.5" height="10"/><rect x="106" y="1" width="1" height="13"/><rect x="107.5" y="4.5" width="3" height="6"/>
 <rect x="126" y="1" width="1" height="13"/><rect x="123.5" y="3" width="3" height="9"/><rect x="131" y="1" width="1" height="13"/><rect x="130" y="4.5" width="3" height="6"/>
 <rect x="157" y="1" width="1" height="13"/><rect x="148" y="3" width="3.5" height="9"/><rect x="152.5" y="1" width="1" height="13"/><rect x="154" y="4.5" width="3" height="6"/>
</svg>
<div class="a" style="left:1103px;top:124.5px;width:158px;height:1px;background:#484848"></div>
<div class="t" style="left:1103px;top:131px;font-size:7px;color:#cdcdcd">Расст. м/у объектами</div>
<div class="a" style="left:1207px;top:129.5px;width:1px;height:29px;background:#484848"></div>
<div class="t" style="left:1214px;top:131.5px;font-size:7px;color:#cdcdcd">Выровнять по:</div>
<svg class="a" style="left:1104px;top:144px" width="36" height="14" viewBox="0 0 36 14" fill="#c4c4c4">
 <rect x="1" y="2" width="1" height="9"/><rect x="3.5" y="1" width="7" height="4.5"/><rect x="3.5" y="7.5" width="9" height="4"/>
 <rect x="23" y="1" width="8" height="1"/><rect x="23.5" y="3" width="3.5" height="10"/><rect x="28.5" y="4.5" width="3.5" height="6"/>
</svg>
<div class="a" style="left:1143.5px;top:143.5px;width:56px;height:13.5px;background:#585858;border-radius:2px"></div>
<div class="a" style="left:1155px;top:143.5px;width:1px;height:13.5px;background:#535353"></div>
<div class="t" style="left:1146px;top:144.5px;font-size:6px;color:#6c6c6c;line-height:1.1">⌃<br>⌄</div>
<div class="t" style="left:1159px;top:147.5px;font-size:7px;color:#6f6f6f">0 px</div>
<svg class="a" style="left:1217px;top:144px" width="20" height="14" viewBox="0 0 20 14"><path d="M3 2.5 L8 2.5 L10.5 5 L10.5 12 L3 12 Z" fill="#c4c4c4"/><path d="M1 0.5 L1 3.5 M0 1.5 L3 1.5" stroke="#c4c4c4" stroke-width="0.8"/><path d="M13 7 L14.8 9 L16.6 7" stroke="#c4c4c4" stroke-width="0.9" fill="none"/></svg>
<!-- gap -->
<div class="a" style="left:1100px;top:162px;width:165px;height:3px;background:#3d3d3d"></div>
<!-- artboards tabs -->
<div class="a" style="left:1100px;top:165px;width:165px;height:17px;background:#444444"></div>
<div class="a" style="left:1100px;top:165px;width:81px;height:17px;background:#535353"></div>
<div class="a" style="left:1238.5px;top:165px;width:1px;height:17px;background:#3f3f3f"></div>
<div class="t" style="left:1105.5px;top:170px;font-size:7px;font-weight:bold;color:#f0f0f0">Монтажные области</div>
<div class="t" style="left:1187px;top:170px;font-size:7px;font-weight:bold;color:#c4c4c4;">Экспорт ресур</div>
<div class="a" style="left:1253.5px;top:171px;width:7px;height:1px;background:#c0c0c0;box-shadow:0 2px 0 #c0c0c0,0 4px 0 #c0c0c0"></div>
<div class="a" style="left:1103.5px;top:185px;width:157px;height:105px;border:1px solid #5c5c5c"></div>
<div class="a" style="left:1103.5px;top:186.5px;width:157px;height:13px;background:#4e6379"></div>
<div class="a" style="left:1130px;top:186.5px;width:1px;height:13px;background:#46586c"></div>
<div class="a" style="left:1233.5px;top:186.5px;width:1px;height:13px;background:#46586c"></div>
<div class="t" style="left:1107.5px;top:189.5px;font-size:7.5px;color:#f0f0f0">1</div>
<div class="t" style="left:1134px;top:189.5px;font-size:7px;color:#e8e8e8">Монтажная область 1</div>
<svg class="a" style="left:1237px;top:187px" width="12" height="12" viewBox="0 0 12 12"><path d="M3.5 3 L7.5 3 L10 5.5 L10 10 L3.5 10 Z" fill="#e0e0e0"/><path d="M1.5 0.5 L1.5 3 M0.3 1.7 L2.8 1.7" stroke="#e0e0e0" stroke-width="0.7"/></svg>
<svg class="a" style="left:1104px;top:292px" width="157" height="11" viewBox="0 0 157 11">
 <g fill="#6a6a6a"><circle cx="3" cy="2.5" r="1.3"/><circle cx="9" cy="2.5" r="1.3"/><circle cx="3" cy="8" r="1.3"/><path d="M3 2.5 L9 2.5 M3 8 L8.5 8 M3.5 7.5 L8.5 3" stroke="#6a6a6a" stroke-width="0.8" fill="none"/><path d="M8.5 6 L11 8 L8.5 10 Z"/>
 <path d="M84 2 L87.5 5.5 L85.5 5.5 L85.5 9.5 L82.5 9.5 L82.5 5.5 L80.5 5.5 Z"/><path d="M103.5 9.5 L100 6 L102 6 L102 2 L105 2 L105 6 L107 6 Z"/>
 <path d="M135 2.5 L142 2.5 M136 3.5 L141 3.5 L140.5 9.5 L136.5 9.5 Z" stroke="#6a6a6a" stroke-width="0.9" fill="none"/></g>
 <path d="M118 1.5 L125 1.5 L125 9.5 L120.5 9.5 L120.5 6 L118 6 Z" fill="#e6e6e6"/>
</svg>
<!-- gap -->
<div class="a" style="left:1100px;top:302.5px;width:165px;height:3px;background:#3d3d3d"></div>
<!-- layers tabs -->
<div class="a" style="left:1100px;top:305.5px;width:165px;height:17.5px;background:#444444"></div>
<div class="a" style="left:1142.7px;top:305.5px;width:29.6px;height:17.5px;background:#535353"></div>
<div class="a" style="left:1224.5px;top:305.5px;width:1px;height:17.5px;background:#3f3f3f"></div>
<div class="t" style="left:1105.5px;top:310.5px;font-size:7px;font-weight:bold;color:#c4c4c4">Свойства</div>
<div class="t" style="left:1149px;top:310.5px;font-size:7px;font-weight:bold;color:#f0f0f0">Слои</div>
<div class="t" style="left:1178px;top:310.5px;font-size:7px;font-weight:bold;color:#c4c4c4">Библиотеки</div>
<div class="a" style="left:1253.5px;top:312px;width:7px;height:1px;background:#c0c0c0;box-shadow:0 2px 0 #c0c0c0,0 4px 0 #c0c0c0"></div>
<div class="a" style="left:1103.5px;top:326px;width:157px;height:371px;border:1px solid #5c5c5c"></div>
<div class="a" style="left:1103.5px;top:327.7px;width:157px;height:13.5px;background:#4e6379"></div>
<div class="a" style="left:1117px;top:327.7px;width:1px;height:13.5px;background:#46586c"></div>
<div class="a" style="left:1135px;top:327.7px;width:1px;height:13.5px;background:#46586c"></div>
<div class="a" style="left:1236.8px;top:327.7px;width:1px;height:13.5px;background:#46586c"></div>
<div class="a" style="left:1132px;top:328.5px;width:2px;height:12px;background:#3f7cf7"></div>
<svg class="a" style="left:1105px;top:331px" width="10" height="7" viewBox="0 0 10 7"><path d="M0.8 3.5 Q5 -0.5 9.2 3.5 Q5 7.5 0.8 3.5 Z" stroke="#e6e6e6" stroke-width="0.9" fill="none"/><circle cx="5" cy="3.5" r="1.4" fill="#e6e6e6"/></svg>
<svg class="a" style="left:1139px;top:331px" width="5" height="7" viewBox="0 0 5 7"><path d="M1 1 L3.5 3.5 L1 6" stroke="#e0e0e0" stroke-width="0.9" fill="none"/></svg>
<div class="a" style="left:1151px;top:328.4px;width:12px;height:12.2px;background:#fff;border:1px solid #1e1e1e"></div>
<svg class="a" style="left:1152px;top:331px" width="10" height="7" viewBox="0 0 10 7"><path d="M1 4 L3 2 L6 2.5 L9 1.5 L8.5 4.5 L5 5 L2 5.5 Z" fill="#b77" stroke="#633" stroke-width="0.5"/></svg>
<div class="t" style="left:1166px;top:331px;font-size:7.5px;color:#f0f0f0">Слой 1</div>
<div class="a" style="left:1241.2px;top:331.8px;width:5.4px;height:5.4px;border:0.9px solid #e0e0e0;border-radius:50%"></div>
<svg class="a" style="left:1253px;top:328px" width="8" height="6" viewBox="0 0 8 6"><path d="M1 0 L7.5 0 L7.5 5.5 Z" fill="#f0f0f0"/></svg>
<!-- bottom bar -->
<div class="t" style="left:1103.5px;top:701px;font-size:7px;color:#d8d8d8">1 слой</div>
<svg class="a" style="left:1150px;top:698px" width="112" height="12" viewBox="0 0 112 12">
 <path d="M2.5 3.5 L2.5 10 L9 10 L9 7 M5.5 2 L10 2 L10 6.5 M10 2 L5.5 6.5" stroke="#d0d0d0" stroke-width="0.9" fill="none"/>
 <circle cx="25.5" cy="5" r="2.6" stroke="#6a6a6a" stroke-width="0.9" fill="none"/><path d="M23.5 7 L21 9.5" stroke="#6a6a6a" stroke-width="1"/>
 <rect x="37" y="2.5" width="6" height="6" stroke="#d0d0d0" stroke-width="0.9" fill="none"/><rect x="39.5" y="5" width="6" height="5.5" stroke="#d0d0d0" stroke-width="0.9" fill="#535353"/><rect x="39" y="4.5" width="3" height="3" fill="#d0d0d0"/>
 <path d="M53 3 L53 6 L55.5 6 M55 2 L55 9 M57 2 L63 2 L63 10 L59 10 L59 6 L57 6 Z" stroke="#d0d0d0" stroke-width="0.9" fill="#d0d0d0"/>
 <path d="M71 2 L78.5 2 L78.5 10 L74 10 L74 6.5 L71 6.5 Z" fill="#e6e6e6"/>
 <path d="M88 2.5 L95 2.5 M89 3.5 L94 3.5 L93.5 10 L89.5 10 Z" stroke="#6a6a6a" stroke-width="0.9" fill="none"/>
</svg>

</body></html>
